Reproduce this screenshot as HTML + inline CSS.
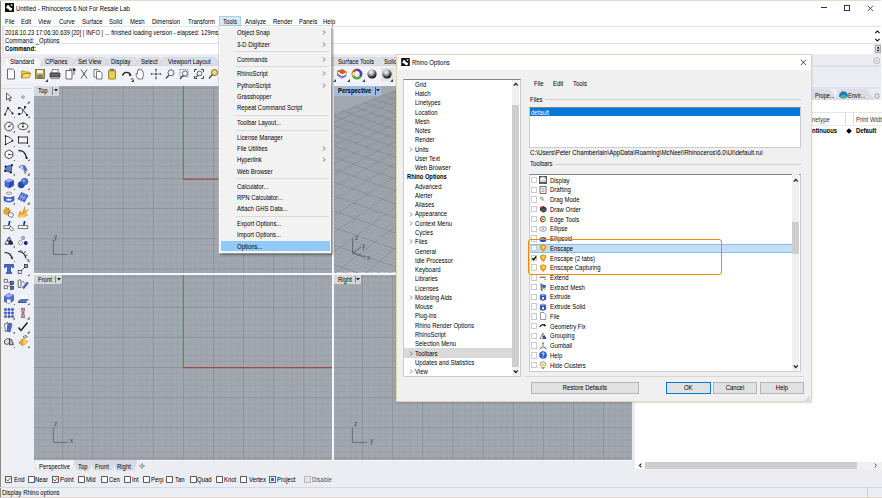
<!DOCTYPE html>
<html><head><meta charset="utf-8"><title>Rhino Options</title>
<style>
html,body{margin:0;padding:0;}
body{width:882px;height:498px;overflow:hidden;background:#fff;position:relative;font-family:"Liberation Sans",sans-serif;}
div,span,svg{position:absolute;box-sizing:border-box;}
.t{white-space:pre;line-height:10px;height:10px;transform-origin:0 50%;}
</style></head><body>

<div style="left:0px;top:0px;width:882px;height:498px;background:#fff;"></div>
<div style="left:0px;top:54px;width:882px;height:444px;background:#ebedf3;"></div>
<div style="left:0px;top:0px;width:881px;height:1px;background:#e3dccd;"></div>
<div style="left:0px;top:1px;width:1px;height:497px;background:#8e8b80;"></div>
<svg style="left:5px;top:3px" width="9" height="9" viewBox="0 0 9 9"><rect width="9" height="9" fill="#111"/><path d="M1.2 4.6 L2.4 2.2 L3.6 2.0 L4.4 3.4 L6.2 5.0 L7.4 5.2 L6.4 7.6 L4.4 7.4 L3.4 5.8 L1.8 5.6 Z" fill="#fff"/><path d="M5.6 1.2 L7.6 1.4 L7.2 3.2 L6.0 2.8Z" fill="#ddd"/></svg>
<span class="t" style="left:16px;top:3.50px;color:#000;font-size:6.7px;transform:scaleX(0.89);">Untitled - Rhinoceros 6 Not For Resale Lab</span>
<div style="left:821px;top:7.3px;width:5.5px;height:0.9px;background:#333;"></div>
<div style="left:843.6px;top:5px;width:6px;height:5.8px;border:0.9px solid #333;"></div>
<svg style="left:867px;top:4.6px" width="7" height="7" viewBox="0 0 7 7"><path d="M0.7 0.7L6.1 6.1M6.1 0.7L0.7 6.1" stroke="#222" stroke-width="0.8" fill="none"/></svg>
<div style="left:219.3px;top:16px;width:21.8px;height:9.7px;background:#d6e9f9;border:0.7px solid #a8d0f2;"></div>
<span class="t" style="left:5px;top:16.50px;color:#000;font-size:6.7px;transform:scaleX(0.89);">File</span>
<span class="t" style="left:20.9px;top:16.50px;color:#000;font-size:6.7px;transform:scaleX(0.89);">Edit</span>
<span class="t" style="left:38.2px;top:16.50px;color:#000;font-size:6.7px;transform:scaleX(0.89);">View</span>
<span class="t" style="left:58.5px;top:16.50px;color:#000;font-size:6.7px;transform:scaleX(0.89);">Curve</span>
<span class="t" style="left:81.7px;top:16.50px;color:#000;font-size:6.7px;transform:scaleX(0.89);">Surface</span>
<span class="t" style="left:108.8px;top:16.50px;color:#000;font-size:6.7px;transform:scaleX(0.89);">Solid</span>
<span class="t" style="left:129.6px;top:16.50px;color:#000;font-size:6.7px;transform:scaleX(0.89);">Mesh</span>
<span class="t" style="left:151.5px;top:16.50px;color:#000;font-size:6.7px;transform:scaleX(0.89);">Dimension</span>
<span class="t" style="left:188px;top:16.50px;color:#000;font-size:6.7px;transform:scaleX(0.89);">Transform</span>
<span class="t" style="left:223.1px;top:16.50px;color:#000;font-size:6.7px;transform:scaleX(0.89);">Tools</span>
<span class="t" style="left:244.7px;top:16.50px;color:#000;font-size:6.7px;transform:scaleX(0.89);">Analyze</span>
<span class="t" style="left:272.9px;top:16.50px;color:#000;font-size:6.7px;transform:scaleX(0.89);">Render</span>
<span class="t" style="left:298.7px;top:16.50px;color:#000;font-size:6.7px;transform:scaleX(0.89);">Panels</span>
<span class="t" style="left:323.4px;top:16.50px;color:#000;font-size:6.7px;transform:scaleX(0.89);">Help</span>
<div style="left:2px;top:25.5px;width:879px;height:28.7px;background:#dfe4ee;"></div>
<div style="left:4px;top:27.4px;width:870px;height:15.7px;background:#fff;"></div>
<div style="left:4px;top:44.4px;width:870px;height:9.2px;background:#fff;"></div>
<div style="left:874px;top:27.4px;width:7px;height:15.8px;background:#fff;"></div>
<span class="t" style="left:5px;top:27.50px;color:#000;font-size:6.7px;transform:scaleX(0.8723880597014925);">2018.10.23 17:06:30.639 [20] | INFO | ... finished loading version - elapsed: 129ms</span>
<span class="t" style="left:5px;top:35.50px;color:#000;font-size:6.7px;transform:scaleX(0.89);">Command: _Options</span>
<span class="t" style="left:5px;top:43.50px;color:#000;font-size:6.7px;transform:scaleX(0.89);font-weight:bold;">Command:</span>
<svg style="left:874px;top:29px" width="7" height="14" viewBox="0 0 7 14"><path d="M1.2 4.2L3.4 2L5.6 4.2M1.2 9.8L3.4 12L5.6 9.8" stroke="#111" stroke-width="1.100" fill="none"/></svg>
<div style="left:874.5px;top:44.6px;width:6.3px;height:8.2px;background:#e9e9e9;border:0.6px solid #aaa;"></div>
<svg style="left:874.5px;top:44.6px" width="6.3" height="8.2" viewBox="0 0 6.3 8.2"><path d="M1.500 3.500L3.150 1.500L4.800 3.500ZM1.500 4.800L3.150 6.800L4.800 4.800Z" fill="#111"/></svg>
<svg style="left:4px;top:56.6px" width="42" height="10" viewBox="0 0 42 10"><path d="M0 10 L0 2 Q0 0.5 1.5 0.5 L33 0.5 Q35 0.5 36 3 L40 10 Z" fill="#f4f6fa" stroke="#cdd2dc" stroke-width="0.6"/></svg>
<span class="t" style="left:9.5px;top:57.30px;color:#000;font-size:6.7px;transform:scaleX(0.89);">Standard</span>
<svg style="left:40px;top:57.2px" width="40" height="9" viewBox="0 0 40 9"><path d="M0 9 L4 1.5 Q4.6 0.5 6 0.5 L30 0.5 Q32 0.5 33 2 L37 9 Z" fill="#dcdfe6" stroke="#c6cbd6" stroke-width="0.6"/></svg>
<span class="t" style="left:45px;top:57.30px;color:#000;font-size:6.7px;transform:scaleX(0.89);">CPlanes</span>
<svg style="left:72px;top:57.2px" width="41" height="9" viewBox="0 0 41 9"><path d="M0 9 L4 1.5 Q4.6 0.5 6 0.5 L31 0.5 Q33 0.5 34 2 L38 9 Z" fill="#dcdfe6" stroke="#c6cbd6" stroke-width="0.6"/></svg>
<span class="t" style="left:77.5px;top:57.30px;color:#000;font-size:6.7px;transform:scaleX(0.89);">Set View</span>
<svg style="left:105px;top:57.2px" width="38" height="9" viewBox="0 0 38 9"><path d="M0 9 L4 1.5 Q4.6 0.5 6 0.5 L28 0.5 Q30 0.5 31 2 L35 9 Z" fill="#dcdfe6" stroke="#c6cbd6" stroke-width="0.6"/></svg>
<span class="t" style="left:110.5px;top:57.30px;color:#000;font-size:6.7px;transform:scaleX(0.89);">Display</span>
<svg style="left:135px;top:57.2px" width="32" height="9" viewBox="0 0 32 9"><path d="M0 9 L4 1.5 Q4.6 0.5 6 0.5 L22 0.5 Q24 0.5 25 2 L29 9 Z" fill="#dcdfe6" stroke="#c6cbd6" stroke-width="0.6"/></svg>
<span class="t" style="left:140.5px;top:57.30px;color:#000;font-size:6.7px;transform:scaleX(0.89);">Select</span>
<svg style="left:159px;top:57.2px" width="64" height="9" viewBox="0 0 64 9"><path d="M0 9 L4 1.5 Q4.6 0.5 6 0.5 L54 0.5 Q56 0.5 57 2 L61 9 Z" fill="#dcdfe6" stroke="#c6cbd6" stroke-width="0.6"/></svg>
<span class="t" style="left:167.5px;top:57.30px;color:#000;font-size:6.7px;transform:scaleX(0.89);">Viewport Layout</span>
<div style="left:2px;top:66.4px;width:879px;height:17.8px;background:#f1f3f8;"></div>
<svg style="left:332px;top:57.2px" width="50" height="9" viewBox="0 0 50 9"><path d="M0 9 L0 0.5 L43 0.5 Q45 0.5 46 2 L50 9 Z" fill="#dcdfe6" stroke="#c6cbd6" stroke-width="0.6"/></svg>
<span class="t" style="left:337.7px;top:57.30px;color:#000;font-size:6.7px;transform:scaleX(0.89);">Surface Tools</span>
<svg style="left:376px;top:57.2px" width="30" height="9" viewBox="0 0 30 9"><path d="M0 9 L4 1.5 Q4.6 0.5 6 0.5 L30 0.5 L30 9 Z" fill="#dcdfe6" stroke="#c6cbd6" stroke-width="0.6"/></svg>
<span class="t" style="left:384.2px;top:57.30px;color:#000;font-size:6.7px;transform:scaleX(0.89);">Solid</span>
<svg style="left:5.3px;top:68.2px" width="12" height="12" viewBox="0 0 12 12"><path d="M2.5 1h5l2 2v8h-7z" fill="#fff" stroke="#444" stroke-width="0.8"/></svg>
<svg style="left:19.9px;top:68.2px" width="12" height="12" viewBox="0 0 12 12"><path d="M1.5 3h3l1 1h4v1.5h-6l-2 4.5z" fill="#f4d24a" stroke="#8a6d10" stroke-width="0.6"/><path d="M1.5 10l2-4.5h7.5l-2 4.5z" fill="#f7dc6a" stroke="#8a6d10" stroke-width="0.6"/></svg>
<svg style="left:34.2px;top:68.2px" width="12" height="12" viewBox="0 0 12 12"><rect x="1.5" y="1.5" width="9" height="9" fill="#b9a83a" stroke="#5c5416" stroke-width="0.7"/><rect x="3" y="2" width="6" height="3.4" fill="#eee"/><rect x="3.6" y="7" width="4.8" height="3.4" fill="#777"/></svg>
<svg style="left:48.8px;top:68.2px" width="12" height="12" viewBox="0 0 12 12"><path d="M3.5 1.5h6l-1 3.5h-6z" fill="#fff" stroke="#333" stroke-width="0.6"/><path d="M1 5h10v4h-10z" fill="#666" stroke="#222" stroke-width="0.6"/><path d="M2 9h8v1.6h-8z" fill="#ddd" stroke="#333" stroke-width="0.5"/></svg>
<svg style="left:63.8px;top:68.2px" width="12" height="12" viewBox="0 0 12 12"><path d="M2 2.5h6v8.5h-6z" fill="#fff" stroke="#444" stroke-width="0.8"/><path d="M5 1h5v6" fill="none" stroke="#444" stroke-width="0.8"/><rect x="9" y="0.5" width="2.4" height="2.4" fill="#222"/></svg>
<svg style="left:77.7px;top:68.2px" width="12" height="12" viewBox="0 0 12 12"><path d="M3 1.5l6 9M9 1.5l-6 9" stroke="#444" stroke-width="0.9" fill="none"/></svg>
<svg style="left:92.0px;top:68.2px" width="12" height="12" viewBox="0 0 12 12"><path d="M2 1.5h4l1.5 1.5v6h-5.5z" fill="#fff" stroke="#444" stroke-width="0.7"/><path d="M4.5 3.5h4l1.5 1.5v6h-5.5z" fill="#fff" stroke="#444" stroke-width="0.7"/></svg>
<svg style="left:106.3px;top:68.2px" width="12" height="12" viewBox="0 0 12 12"><rect x="2.5" y="2" width="7" height="9" rx="0.8" fill="#e8cf4a" stroke="#6d5a10" stroke-width="0.7"/><rect x="4.2" y="1" width="3.6" height="2" fill="#999" stroke="#444" stroke-width="0.4"/></svg>
<svg style="left:121.4px;top:68.2px" width="12" height="12" viewBox="0 0 12 12"><path d="M1.5 7.5c1.5-4 6-4 8-1" fill="none" stroke="#222" stroke-width="1.4"/><path d="M8 5.2l3 2-3 1z" fill="#222"/><path d="M9.5 11.5l2-2v2z" fill="#333"/></svg>
<svg style="left:134.7px;top:68.2px" width="12" height="12" viewBox="0 0 12 12"><path d="M3 11c-1.5-2-2-4-2-5.5l1.5 0.5v-3.5l1.2-0.3v-1l1.3-0.2 0.3 0.8 1.3 0 0.2 1 1.2 0.4c0.6 2.5 0.4 5-0.5 7.8z" fill="#fff" stroke="#444" stroke-width="0.7"/></svg>
<svg style="left:149.8px;top:68.2px" width="12" height="12" viewBox="0 0 12 12"><circle cx="6" cy="6" r="1.3" fill="#555"/><path d="M6 1v3M6 8v3M1 6h3M8 6h3" stroke="#555" stroke-width="0.9"/><path d="M6 0.5l1.2 1.5h-2.4zM6 11.5l1.2-1.5h-2.4zM0.5 6l1.5-1.2v2.4zM11.5 6l-1.5-1.2v2.4z" fill="#555"/></svg>
<svg style="left:163.6px;top:68.2px" width="12" height="12" viewBox="0 0 12 12"><circle cx="7" cy="4.8" r="3" fill="#eef" stroke="#444" stroke-width="0.8"/><path d="M4.8 7.2l-3 3.4" stroke="#444" stroke-width="1.3"/></svg>
<svg style="left:178.2px;top:68.2px" width="12" height="12" viewBox="0 0 12 12"><rect x="2" y="1.5" width="8" height="7" fill="none" stroke="#555" stroke-width="0.7" stroke-dasharray="1.4 1"/><circle cx="7" cy="5.5" r="2.6" fill="#eef" stroke="#444" stroke-width="0.8"/><path d="M5 7.6l-3 3.4" stroke="#444" stroke-width="1.3"/></svg>
<svg style="left:192.5px;top:68.2px" width="12" height="12" viewBox="0 0 12 12"><path d="M1.5 4v-2.5h2.5M8 1.5h2.5v2.5M10.5 8v2.5h-2.5M4 10.5h-2.5v-2.5" fill="none" stroke="#333" stroke-width="0.9"/><circle cx="6.5" cy="5.5" r="2.4" fill="#eef" stroke="#444" stroke-width="0.8"/><path d="M4.8 7.2l-2 2.4" stroke="#444" stroke-width="1.1"/></svg>
<svg style="left:207.0px;top:68.2px" width="12" height="12" viewBox="0 0 12 12"><circle cx="7.5" cy="4.5" r="3" fill="#f6e04a" stroke="#444" stroke-width="0.8"/><path d="M5.3 6.8l-3.4 3.8" stroke="#444" stroke-width="1.3"/></svg>
<svg style="left:336.0px;top:68.2px" width="12" height="12" viewBox="0 0 12 12"><path d="M1.5 3l5-1.5 4 2.5-1 4.5-4 2-4-3z" fill="#fff" stroke="#333" stroke-width="0.5"/><path d="M1.5 3l5-1.5 4 2.5-4.5 2.5z" fill="#e8531e"/><path d="M1.5 6.2l4.5 3 3.6-1.8" fill="none" stroke="#2c49b8" stroke-width="1.1"/></svg>
<svg style="left:350.5px;top:68.2px" width="12" height="12" viewBox="0 0 12 12"><circle cx="6" cy="6" r="4" fill="none" stroke="#e33" stroke-width="2.2"/><path d="M6 2a4 4 0 0 1 3.46 6" fill="none" stroke="#3a3ae0" stroke-width="2.2"/><path d="M9.46 8a4 4 0 0 1-6.92 0" fill="none" stroke="#3c3" stroke-width="2.2"/><path d="M2.54 8a4 4 0 0 1 0-4" fill="none" stroke="#ee3" stroke-width="2.2"/><circle cx="6" cy="6" r="5.2" fill="none" stroke="#333" stroke-width="0.4"/></svg>
<svg style="left:365.6px;top:68.2px" width="12" height="12" viewBox="0 0 12 12"><defs><radialGradient id="g1" cx="0.4" cy="0.3" r="0.7"><stop offset="0" stop-color="#fff"/><stop offset="0.35" stop-color="#bbb"/><stop offset="0.8" stop-color="#333"/><stop offset="1" stop-color="#000"/></radialGradient></defs><circle cx="6" cy="6" r="4.6" fill="url(#g1)"/></svg>
<div style="left:380.5px;top:68px;width:13px;height:13px;background:#dfe2e8;"></div>
<svg style="left:380.5px;top:68.2px" width="12" height="12" viewBox="0 0 12 12"><defs><radialGradient id="g2" cx="0.4" cy="0.3" r="0.7"><stop offset="0" stop-color="#fff"/><stop offset="0.35" stop-color="#bbb"/><stop offset="0.8" stop-color="#333"/><stop offset="1" stop-color="#000"/></radialGradient></defs><circle cx="6" cy="6" r="4.6" fill="url(#g2)"/></svg>
<svg style="left:44.5px;top:79px" width="3" height="3" viewBox="0 0 3 3"><path d="M3 0v3h-3z" fill="#444"/></svg>
<svg style="left:131.0px;top:79px" width="3" height="3" viewBox="0 0 3 3"><path d="M3 0v3h-3z" fill="#444"/></svg>
<svg style="left:332.5px;top:79px" width="3" height="3" viewBox="0 0 3 3"><path d="M3 0v3h-3z" fill="#444"/></svg>
<svg style="left:347.0px;top:79px" width="3" height="3" viewBox="0 0 3 3"><path d="M3 0v3h-3z" fill="#444"/></svg>
<svg style="left:361.5px;top:79px" width="3" height="3" viewBox="0 0 3 3"><path d="M3 0v3h-3z" fill="#444"/></svg>
<svg style="left:390.0px;top:79px" width="3" height="3" viewBox="0 0 3 3"><path d="M3 0v3h-3z" fill="#444"/></svg>
<div style="left:1px;top:84.5px;width:33px;height:403px;background:#eef0f5;"></div>
<div style="left:2px;top:88.3px;width:30px;height:0.8px;background:#d5dae4;"></div>
<svg style="left:2.5px;top:90.8px" width="12" height="12" viewBox="0 0 12 12"><path d="M3.5 2l0 7 1.8-1.6 1.3 2.8 1.1-0.5-1.3-2.7 2.3-0.2z" fill="#fff" stroke="#222" stroke-width="0.7"/></svg>
<svg style="left:17.0px;top:90.8px" width="12" height="12" viewBox="0 0 12 12"><circle cx="6" cy="6" r="1.3" fill="#ddd" stroke="#666" stroke-width="0.6"/></svg>
<svg style="left:2.5px;top:105.1px" width="12" height="12" viewBox="0 0 12 12"><path d="M2 9.5L5 3l4.5 5.5" fill="none" stroke="#222" stroke-width="0.8"/><circle cx="2" cy="9.5" r="0.9"/><circle cx="5" cy="3" r="0.9"/><circle cx="9.5" cy="8.5" r="0.9"/></svg>
<svg style="left:17.0px;top:105.1px" width="12" height="12" viewBox="0 0 12 12"><path d="M2 3c5-1 5 7 0 6M8 2l-1.5 3.5 3.5 4.5" fill="none" stroke="#222" stroke-width="0.8"/><circle cx="2" cy="3" r="1"/><circle cx="2" cy="9" r="1"/><circle cx="8" cy="2" r="1"/><circle cx="10" cy="10" r="1"/></svg>
<svg style="left:2.5px;top:119.5px" width="12" height="12" viewBox="0 0 12 12"><circle cx="6" cy="6.5" r="4.3" fill="#f4f4f4" stroke="#222" stroke-width="0.8"/><path d="M6 6.5l3-3" stroke="#222" stroke-width="0.8"/><circle cx="6" cy="6.5" r="0.8"/></svg>
<svg style="left:17.0px;top:119.5px" width="12" height="12" viewBox="0 0 12 12"><ellipse cx="6" cy="6.5" rx="5" ry="3.2" fill="#f4f4f4" stroke="#222" stroke-width="0.8"/><circle cx="6" cy="6.5" r="0.9"/><path d="M6 2v3" stroke="#222" stroke-width="0.7"/></svg>
<svg style="left:2.5px;top:133.9px" width="12" height="12" viewBox="0 0 12 12"><path d="M2.5 2c4 0.5 6.5 2.5 7 5l-7 3.5z" fill="#f4f4f4" stroke="#222" stroke-width="0.8"/><circle cx="2.5" cy="2" r="0.8"/><circle cx="2.5" cy="10.5" r="0.8"/><circle cx="9.5" cy="7" r="0.8"/></svg>
<svg style="left:17.0px;top:133.9px" width="12" height="12" viewBox="0 0 12 12"><rect x="1.5" y="3" width="9" height="6" fill="#f4f4f4" stroke="#222" stroke-width="0.9"/><circle cx="1.5" cy="3" r="0.7"/><circle cx="10.5" cy="9" r="0.7"/></svg>
<svg style="left:2.5px;top:148.3px" width="12" height="12" viewBox="0 0 12 12"><path d="M6 2l3.8 2.2v4.4L6 10.8 2.2 8.6V4.2z" fill="#fff" stroke="#222" stroke-width="0.8"/><circle cx="6" cy="6.5" r="0.8"/><path d="M6 6.5h3.5" stroke="#222" stroke-width="0.6"/></svg>
<svg style="left:17.0px;top:148.3px" width="12" height="12" viewBox="0 0 12 12"><path d="M1.5 2.5c5 0 7 2 8 7.5" fill="none" stroke="#222" stroke-width="1.4"/><circle cx="9.7" cy="10" r="1"/></svg>
<svg style="left:2.5px;top:162.7px" width="12" height="12" viewBox="0 0 12 12"><path d="M2.5 3.5l6.5-1.5-1 7.5-6-1.5z" fill="#5b7fe0" stroke="#222" stroke-width="0.6"/><circle cx="2.5" cy="3.5" r="0.9"/><circle cx="9" cy="2" r="0.9"/><circle cx="8" cy="9.5" r="0.9"/><circle cx="2" cy="8" r="0.9"/></svg>
<svg style="left:17.0px;top:162.7px" width="12" height="12" viewBox="0 0 12 12"><path d="M2 4c2-2 4-2 6-1l2 4-2 3.5c0-3-2-5-6-6.500z" fill="#fff" stroke="#222" stroke-width="0.6"/><path d="M5 3.200l3-0.200 2 4-2.500 1.500c-0.500-2-1.500-3.500-2.500-5.300z" fill="#4a6fd8"/></svg>
<svg style="left:2.5px;top:177.0px" width="12" height="12" viewBox="0 0 12 12"><path d="M2 4l4-2 4.5 1.500v5l-4.500 2.500-4-2z" fill="#4a6fd8" stroke="#1a2f80" stroke-width="0.5"/><path d="M2 4l4 1.500 4.500-2-4.500-1.500z" fill="#9db4f4"/><path d="M6 5.500v5.500l4.500-2.500v-5z" fill="#2c49b8"/></svg>
<svg style="left:17.0px;top:177.0px" width="12" height="12" viewBox="0 0 12 12"><circle cx="4.300" cy="7.800" r="3.200" fill="#2c49b8" stroke="#14256a" stroke-width="0.4"/><circle cx="7.600" cy="4.600" r="3.400" fill="#4a6fd8" stroke="#14256a" stroke-width="0.4"/><circle cx="6.800" cy="3.600" r="1.200" fill="#a9bdf6"/></svg>
<svg style="left:2.5px;top:191.4px" width="12" height="12" viewBox="0 0 12 12"><ellipse cx="6" cy="2.200" rx="2.800" ry="1.100" fill="#fff" stroke="#333" stroke-width="0.5"/><path d="M1 5.500c3 1.500 7 1.500 10 0v4c-3 2-7 2-10 0z" fill="#4a6fd8" stroke="#14256a" stroke-width="0.5"/><ellipse cx="6" cy="8.700" rx="2.600" ry="1" fill="#fff"/></svg>
<svg style="left:17.0px;top:191.4px" width="12" height="12" viewBox="0 0 12 12"><path d="M4.500 1.500l6.500 3-3.500 6.500-6.500-3z" fill="#4a6fd8" stroke="#14256a" stroke-width="0.5"/><path d="M2.800 5l6.500 3M6.200 2.500l-3.400 6.300M8.500 3.500l-3.400 6.300" stroke="#c7d3fa" stroke-width="0.6"/></svg>
<svg style="left:2.5px;top:205.8px" width="12" height="12" viewBox="0 0 12 12"><path d="M3 1l1.200 1.800 2-0.800-0.400 2.100 2 0.700-1.700 1.200 0.700 2-2-0.500-1 1.800-0.900-1.900-2.100 0.400 0.800-1.900-1.600-1.300 2-0.600z" fill="#f2a516" stroke="#8a5a06" stroke-width="0.4"/><path d="M6 6l4.500 2-1.500 3.500-3.500-1.500z" fill="#fff" stroke="#333" stroke-width="0.6"/></svg>
<svg style="left:17.0px;top:205.8px" width="12" height="12" viewBox="0 0 12 12"><path d="M1 11l2-6 2 2.500 3-7-0.500 5.500 3.500-2.500-3 5 3 0.500-4 2z" fill="#f5a20a" stroke="#a05a00" stroke-width="0.3"/><path d="M1 11l3-3 1.500 1.500 3-4.500-1 4 2.500 0.500-3 1.500z" fill="#fbd34a"/></svg>
<svg style="left:2.5px;top:220.2px" width="12" height="12" viewBox="0 0 12 12"><path d="M5.800 1h1.800l-1 4.200h-1.600z" fill="#1b2fa0"/><rect x="1" y="5.800" width="6.500" height="2.600" fill="#fff" stroke="#222" stroke-width="0.6"/><path d="M6 8l2-1.600 2.600 3-2 1.600z" fill="#fff" stroke="#222" stroke-width="0.6"/></svg>
<svg style="left:17.0px;top:220.2px" width="12" height="12" viewBox="0 0 12 12"><path d="M6.800 1h1.800l-1 4.200h-1.600z" fill="#1b2fa0"/><rect x="1.200" y="5.800" width="9.600" height="2.800" fill="#fff" stroke="#222" stroke-width="0.6"/></svg>
<svg style="left:2.5px;top:234.6px" width="12" height="12" viewBox="0 0 12 12"><path d="M6 1.500l4.500 8h-9z" fill="#222"/><circle cx="6" cy="4.500" r="1.700" fill="#9db4f4" stroke="#000" stroke-width="0.4"/><circle cx="4.200" cy="7.600" r="1.700" fill="#fff" stroke="#000" stroke-width="0.4"/><circle cx="7.800" cy="7.600" r="1.700" fill="#1b2fa0" stroke="#000" stroke-width="0.4"/></svg>
<svg style="left:17.0px;top:234.6px" width="12" height="12" viewBox="0 0 12 12"><circle cx="6" cy="3" r="1.700" fill="#9db4f4" stroke="#556" stroke-width="0.4"/><circle cx="3.400" cy="7.600" r="2" fill="#fff" stroke="#444" stroke-width="0.5"/><circle cx="8.800" cy="8" r="1.900" fill="#14208a"/></svg>
<svg style="left:2.5px;top:248.9px" width="12" height="12" viewBox="0 0 12 12"><path d="M1.500 3.500c4 0 7 2 7.500 6.500" fill="none" stroke="#222" stroke-width="1.200"/><path d="M8 7.500l2.300 0.500-1 3z" fill="#444"/></svg>
<svg style="left:17.0px;top:248.9px" width="12" height="12" viewBox="0 0 12 12"><path d="M1 2.500c4.500 0 7 2.500 8 7" fill="none" stroke="#222" stroke-width="1.100"/><path d="M3.500 1l1.500 1.500M7 3.500l1.800-1M8.500 6.500l2-0.500" stroke="#222" stroke-width="0.800"/><path d="M9.500 11.500l2-2v2z" fill="#333"/></svg>
<svg style="left:2.5px;top:263.3px" width="12" height="12" viewBox="0 0 12 12"><path d="M1.500 1.500h9v3h-1.200l-0.600-1.200h-1.200v5.500l1.200 0.700v1h-5.400v-1l1.200-0.700v-5.500h-1.200l-0.600 1.200h-1.200z" fill="#3f66dc" stroke="#14256a" stroke-width="0.6"/></svg>
<svg style="left:17.0px;top:263.3px" width="12" height="12" viewBox="0 0 12 12"><path d="M3 9l6-6" stroke="#222" stroke-width="0.700"/><rect x="1.200" y="7.500" width="3" height="3" fill="#fff" stroke="#222" stroke-width="0.700"/><rect x="7.600" y="1.500" width="3" height="3" fill="#7f9cf0" stroke="#222" stroke-width="0.700"/></svg>
<svg style="left:2.5px;top:277.7px" width="12" height="12" viewBox="0 0 12 12"><path d="M3 3l6 3-6 3.500M9 6v4" stroke="#333" stroke-width="0.500" fill="none"/><rect x="1.200" y="1.200" width="3" height="3" fill="#fff" stroke="#222" stroke-width="0.600"/><rect x="7.200" y="3.200" width="3.200" height="3.200" fill="#4a6fd8" stroke="#222" stroke-width="0.600"/><rect x="1.200" y="7.800" width="3" height="3" fill="#fff" stroke="#222" stroke-width="0.600"/><rect x="7.600" y="8.400" width="3" height="3" fill="#4a6fd8" stroke="#222" stroke-width="0.600"/></svg>
<svg style="left:17.0px;top:277.7px" width="12" height="12" viewBox="0 0 12 12"><rect x="1.200" y="2" width="2.800" height="7.500" rx="0.600" fill="#fff" stroke="#222" stroke-width="0.700"/><path d="M5.500 9.500l4.500-5.500 1.300 1.200-4.500 5.500z" fill="#4a6fd8" stroke="#14256a" stroke-width="0.500"/><path d="M5.500 3.500l2 1" stroke="#222" stroke-width="0.800"/></svg>
<svg style="left:2.5px;top:292.1px" width="12" height="12" viewBox="0 0 12 12"><path d="M1.500 4l4-2.500 5 1.500v5.500l-4.500 3-4.500-2z" fill="#4a6fd8" stroke="#14256a" stroke-width="0.500"/><path d="M1.500 4l4.500 1.500 4.500-2.500-5-1.500z" fill="#9db4f4"/><path d="M4 7.500h3.500v3l-1.500 1-2-1z" fill="#fff"/></svg>
<svg style="left:17.0px;top:292.1px" width="12" height="12" viewBox="0 0 12 12"><path d="M1 9.500l2.500-2h8l-2.500 2z" fill="#4a6fd8" stroke="#14256a" stroke-width="0.400"/><path d="M3 3v4M6 3v4M9 3v4" stroke="#fff" stroke-width="1.300"/><path d="M1 10.500h8.500" stroke="#14256a" stroke-width="0.800"/></svg>
<svg style="left:2.5px;top:306.5px" width="12" height="12" viewBox="0 0 12 12"><g fill="#3f66dc" stroke="#14256a" stroke-width="0.300"><circle cx="2.500" cy="2.500" r="1.300"/><circle cx="6" cy="2.500" r="1.300"/><circle cx="9.500" cy="2.500" r="1.300"/><circle cx="2.500" cy="6" r="1.300"/><circle cx="6" cy="6" r="1.300"/><circle cx="9.500" cy="6" r="1.300"/><circle cx="2.500" cy="9.500" r="1.300" fill="#777"/><circle cx="6" cy="9.500" r="1.300"/><circle cx="9.500" cy="9.500" r="1.300"/></g></svg>
<svg style="left:17.0px;top:306.5px" width="12" height="12" viewBox="0 0 12 12"><path d="M4.600 1.200c1 0.600 2 0.600 2.800 0 0.600 2-0.600 2.800-0.600 4.800s1.200 2.800 0.600 4.800c-1-0.600-2-0.600-2.800 0-0.600-2 0.600-2.800 0.600-4.800s-1.200-2.800-0.600-4.800z" fill="#f3f3f3" stroke="#222" stroke-width="0.600"/><path d="M6 1.500v9" stroke="#d22" stroke-width="0.900"/></svg>
<svg style="left:2.5px;top:320.8px" width="12" height="12" viewBox="0 0 12 12"><path d="M1.500 3l2.500-1 1 7.500-2.500 1z" fill="#fff" stroke="#222" stroke-width="0.600"/><path d="M6 2l3 1-2 8-3-1z" fill="#4a6fd8" stroke="#14256a" stroke-width="0.500"/><path d="M4 1l1.500 1.500" stroke="#222" stroke-width="0.700"/></svg>
<svg style="left:17.0px;top:320.8px" width="12" height="12" viewBox="0 0 12 12"><path d="M1.500 6.500l2.500 3 6.500-8" fill="none" stroke="#111" stroke-width="1.300"/></svg>
<svg style="left:2.5px;top:335.2px" width="12" height="12" viewBox="0 0 12 12"><path d="M1.500 5.500l3-2 2.500 0.500v4l-3 1.500-2.500-1z" fill="#ddd" stroke="#222" stroke-width="0.700"/><path d="M6.500 4l2 0.500 2 5-4 0.500z" fill="#bbb" stroke="#222" stroke-width="0.700"/></svg>
<svg style="left:17.0px;top:335.2px" width="12" height="12" viewBox="0 0 12 12"><path d="M2 8l4.500-5 4 4-4.500 3.500z" fill="#f3a81e" stroke="#7a4a00" stroke-width="0.500"/><path d="M6.500 3l4 4-4.500 3.500z" fill="#f9cf6a"/><path d="M6 1.500l3-1 1.500 1.200-3 1z" fill="#fff" stroke="#222" stroke-width="0.600"/></svg>
<svg style="left:27.2px;top:101.3px" width="2.6" height="2.6" viewBox="0 0 3 3"><path d="M3 0v3h-3z" fill="#444"/></svg>
<svg style="left:12.7px;top:115.7px" width="2.6" height="2.6" viewBox="0 0 3 3"><path d="M3 0v3h-3z" fill="#444"/></svg>
<svg style="left:27.2px;top:115.7px" width="2.6" height="2.6" viewBox="0 0 3 3"><path d="M3 0v3h-3z" fill="#444"/></svg>
<svg style="left:12.7px;top:130.1px" width="2.6" height="2.6" viewBox="0 0 3 3"><path d="M3 0v3h-3z" fill="#444"/></svg>
<svg style="left:27.2px;top:130.1px" width="2.6" height="2.6" viewBox="0 0 3 3"><path d="M3 0v3h-3z" fill="#444"/></svg>
<svg style="left:12.7px;top:144.5px" width="2.6" height="2.6" viewBox="0 0 3 3"><path d="M3 0v3h-3z" fill="#444"/></svg>
<svg style="left:27.2px;top:144.5px" width="2.6" height="2.6" viewBox="0 0 3 3"><path d="M3 0v3h-3z" fill="#444"/></svg>
<svg style="left:12.7px;top:158.9px" width="2.6" height="2.6" viewBox="0 0 3 3"><path d="M3 0v3h-3z" fill="#444"/></svg>
<svg style="left:27.2px;top:158.9px" width="2.6" height="2.6" viewBox="0 0 3 3"><path d="M3 0v3h-3z" fill="#444"/></svg>
<svg style="left:12.7px;top:173.2px" width="2.6" height="2.6" viewBox="0 0 3 3"><path d="M3 0v3h-3z" fill="#444"/></svg>
<svg style="left:27.2px;top:173.2px" width="2.6" height="2.6" viewBox="0 0 3 3"><path d="M3 0v3h-3z" fill="#444"/></svg>
<svg style="left:12.7px;top:187.6px" width="2.6" height="2.6" viewBox="0 0 3 3"><path d="M3 0v3h-3z" fill="#444"/></svg>
<svg style="left:27.2px;top:187.6px" width="2.6" height="2.6" viewBox="0 0 3 3"><path d="M3 0v3h-3z" fill="#444"/></svg>
<svg style="left:12.7px;top:202.0px" width="2.6" height="2.6" viewBox="0 0 3 3"><path d="M3 0v3h-3z" fill="#444"/></svg>
<svg style="left:27.2px;top:202.0px" width="2.6" height="2.6" viewBox="0 0 3 3"><path d="M3 0v3h-3z" fill="#444"/></svg>
<svg style="left:12.7px;top:245.2px" width="2.6" height="2.6" viewBox="0 0 3 3"><path d="M3 0v3h-3z" fill="#444"/></svg>
<svg style="left:12.7px;top:259.5px" width="2.6" height="2.6" viewBox="0 0 3 3"><path d="M3 0v3h-3z" fill="#444"/></svg>
<svg style="left:27.2px;top:259.5px" width="2.6" height="2.6" viewBox="0 0 3 3"><path d="M3 0v3h-3z" fill="#444"/></svg>
<svg style="left:27.2px;top:273.9px" width="2.6" height="2.6" viewBox="0 0 3 3"><path d="M3 0v3h-3z" fill="#444"/></svg>
<svg style="left:12.7px;top:302.7px" width="2.6" height="2.6" viewBox="0 0 3 3"><path d="M3 0v3h-3z" fill="#444"/></svg>
<svg style="left:27.2px;top:302.7px" width="2.6" height="2.6" viewBox="0 0 3 3"><path d="M3 0v3h-3z" fill="#444"/></svg>
<svg style="left:12.7px;top:317.1px" width="2.6" height="2.6" viewBox="0 0 3 3"><path d="M3 0v3h-3z" fill="#444"/></svg>
<svg style="left:27.2px;top:317.1px" width="2.6" height="2.6" viewBox="0 0 3 3"><path d="M3 0v3h-3z" fill="#444"/></svg>
<svg style="left:12.7px;top:331.4px" width="2.6" height="2.6" viewBox="0 0 3 3"><path d="M3 0v3h-3z" fill="#444"/></svg>
<svg style="left:27.2px;top:331.4px" width="2.6" height="2.6" viewBox="0 0 3 3"><path d="M3 0v3h-3z" fill="#444"/></svg>
<svg style="left:12.7px;top:345.8px" width="2.6" height="2.6" viewBox="0 0 3 3"><path d="M3 0v3h-3z" fill="#444"/></svg>
<svg style="left:27.2px;top:345.8px" width="2.6" height="2.6" viewBox="0 0 3 3"><path d="M3 0v3h-3z" fill="#444"/></svg>
<div style="left:34px;top:85px;width:600px;height:376px;background:#f4f6fa;"></div>
<svg style="left:34px;top:86px" width="298" height="187" viewBox="0 0 298 187"><defs><pattern id="p1" x="28.24" y="1.58" width="30.14" height="30.14" patternUnits="userSpaceOnUse"><path d="M6.528 0V30.14M0 6.528H30.14M12.556 0V30.14M0 12.556H30.14M18.584 0V30.14M0 18.584H30.14M24.612 0V30.14M0 24.612H30.14" stroke="#9aa0a8" stroke-width="1"/><path d="M0.5 0V30.14M0 0.5H30.14" stroke="#8d939b" stroke-width="1"/></pattern></defs><rect width="298" height="187" fill="#a2a8b0"/><rect width="298" height="187" fill="url(#p1)"/><path d="M149.400 0V93.600" stroke="#4c9a50" stroke-width="1.250"/><path d="M148.800 93.100H298" stroke="#a04a4a" stroke-width="1.250"/></svg>
<svg style="left:34px;top:274px" width="298" height="186" viewBox="0 0 298 186"><defs><pattern id="p2" x="28.24" y="2.58" width="30.14" height="30.14" patternUnits="userSpaceOnUse"><path d="M6.528 0V30.14M0 6.528H30.14M12.556 0V30.14M0 12.556H30.14M18.584 0V30.14M0 18.584H30.14M24.612 0V30.14M0 24.612H30.14" stroke="#9aa0a8" stroke-width="1"/><path d="M0.5 0V30.14M0 0.5H30.14" stroke="#8d939b" stroke-width="1"/></pattern></defs><rect width="298" height="186" fill="#a2a8b0"/><rect width="298" height="186" fill="url(#p2)"/><path d="M149.400 0V94" stroke="#4c9a50" stroke-width="1.250"/><path d="M148.800 93.500H298" stroke="#a04a4a" stroke-width="1.250"/></svg>
<svg style="left:334px;top:274px" width="298" height="186" viewBox="0 0 298 186"><defs><pattern id="p3" x="28.00" y="2.58" width="30.14" height="30.14" patternUnits="userSpaceOnUse"><path d="M6.528 0V30.14M0 6.528H30.14M12.556 0V30.14M0 12.556H30.14M18.584 0V30.14M0 18.584H30.14M24.612 0V30.14M0 24.612H30.14" stroke="#9aa0a8" stroke-width="1"/><path d="M0.5 0V30.14M0 0.5H30.14" stroke="#8d939b" stroke-width="1"/></pattern></defs><rect width="298" height="186" fill="#a2a8b0"/><rect width="298" height="186" fill="url(#p3)"/></svg>
<svg style="left:334.3px;top:86px" width="64" height="186.5" viewBox="334.3 86 64 186.5"><rect x="334.3" y="86" width="64" height="186.5" fill="#a2a8b0"/><defs><clipPath id="cp"><path d="M334 114.300L398.500 89L398.500 273H334z"/></clipPath></defs><g clip-path="url(#cp)"><path d="M334.400 114.1L400 88.2" stroke="#959ba3" stroke-width="0.6"/><path d="M334.400 115.3L400 89.2" stroke="#858b93" stroke-width="0.9"/><path d="M334.400 116.6L400 90.3" stroke="#959ba3" stroke-width="0.6"/><path d="M334.400 117.9L400 91.4" stroke="#959ba3" stroke-width="0.6"/><path d="M334.400 119.2L400 92.5" stroke="#959ba3" stroke-width="0.6"/><path d="M334.400 120.5L400 93.6" stroke="#959ba3" stroke-width="0.6"/><path d="M334.400 121.8L400 94.7" stroke="#858b93" stroke-width="0.9"/><path d="M334.400 123.2L400 95.8" stroke="#959ba3" stroke-width="0.6"/><path d="M334.400 124.6L400 97.0" stroke="#959ba3" stroke-width="0.6"/><path d="M334.400 126.0L400 98.2" stroke="#959ba3" stroke-width="0.6"/><path d="M334.400 127.4L400 99.4" stroke="#959ba3" stroke-width="0.6"/><path d="M334.400 128.8L400 100.6" stroke="#858b93" stroke-width="0.9"/><path d="M334.400 130.3L400 101.9" stroke="#959ba3" stroke-width="0.6"/><path d="M334.400 131.8L400 103.1" stroke="#959ba3" stroke-width="0.6"/><path d="M334.400 133.3L400 104.4" stroke="#959ba3" stroke-width="0.6"/><path d="M334.400 134.9L400 105.7" stroke="#959ba3" stroke-width="0.6"/><path d="M334.400 136.5L400 107.0" stroke="#858b93" stroke-width="0.9"/><path d="M334.400 138.1L400 108.4" stroke="#959ba3" stroke-width="0.6"/><path d="M334.400 139.7L400 109.7" stroke="#959ba3" stroke-width="0.6"/><path d="M334.400 141.3L400 111.1" stroke="#959ba3" stroke-width="0.6"/><path d="M334.400 143.0L400 112.6" stroke="#959ba3" stroke-width="0.6"/><path d="M334.400 144.7L400 114.0" stroke="#858b93" stroke-width="0.9"/><path d="M334.400 146.5L400 115.5" stroke="#959ba3" stroke-width="0.6"/><path d="M334.400 148.3L400 117.0" stroke="#959ba3" stroke-width="0.6"/><path d="M334.400 150.1L400 118.5" stroke="#959ba3" stroke-width="0.6"/><path d="M334.400 151.9L400 120.0" stroke="#959ba3" stroke-width="0.6"/><path d="M334.400 153.8L400 121.6" stroke="#858b93" stroke-width="0.9"/><path d="M334.400 155.7L400 123.2" stroke="#959ba3" stroke-width="0.6"/><path d="M334.400 157.6L400 124.9" stroke="#959ba3" stroke-width="0.6"/><path d="M334.400 159.6L400 126.5" stroke="#959ba3" stroke-width="0.6"/><path d="M334.400 161.7L400 128.2" stroke="#959ba3" stroke-width="0.6"/><path d="M334.400 163.7L400 130.0" stroke="#858b93" stroke-width="0.9"/><path d="M334.400 165.8L400 131.8" stroke="#959ba3" stroke-width="0.6"/><path d="M334.400 168.0L400 133.6" stroke="#959ba3" stroke-width="0.6"/><path d="M334.400 170.1L400 135.4" stroke="#959ba3" stroke-width="0.6"/><path d="M334.400 172.4L400 137.3" stroke="#959ba3" stroke-width="0.6"/><path d="M334.400 174.7L400 139.2" stroke="#858b93" stroke-width="0.9"/><path d="M334.400 177.0L400 141.2" stroke="#959ba3" stroke-width="0.6"/><path d="M334.400 179.3L400 143.1" stroke="#959ba3" stroke-width="0.6"/><path d="M334.400 181.8L400 145.2" stroke="#959ba3" stroke-width="0.6"/><path d="M334.400 184.2L400 147.3" stroke="#959ba3" stroke-width="0.6"/><path d="M334.400 186.8L400 149.4" stroke="#858b93" stroke-width="0.9"/><path d="M334.400 189.3L400 151.6" stroke="#959ba3" stroke-width="0.6"/><path d="M334.400 192.0L400 153.8" stroke="#959ba3" stroke-width="0.6"/><path d="M334.400 194.7L400 156.1" stroke="#959ba3" stroke-width="0.6"/><path d="M334.400 197.4L400 158.4" stroke="#959ba3" stroke-width="0.6"/><path d="M334.400 200.3L400 160.8" stroke="#858b93" stroke-width="0.9"/><path d="M334.400 203.1L400 163.2" stroke="#959ba3" stroke-width="0.6"/><path d="M334.400 206.1L400 165.7" stroke="#959ba3" stroke-width="0.6"/><path d="M334.400 209.1L400 168.2" stroke="#959ba3" stroke-width="0.6"/><path d="M334.400 212.2L400 170.8" stroke="#959ba3" stroke-width="0.6"/><path d="M334.400 215.4L400 173.5" stroke="#858b93" stroke-width="0.9"/><path d="M334.400 218.6L400 176.2" stroke="#959ba3" stroke-width="0.6"/><path d="M334.400 221.9L400 179.0" stroke="#959ba3" stroke-width="0.6"/><path d="M334.400 225.3L400 181.9" stroke="#959ba3" stroke-width="0.6"/><path d="M334.400 228.8L400 184.8" stroke="#959ba3" stroke-width="0.6"/><path d="M334.400 232.4L400 187.8" stroke="#858b93" stroke-width="0.9"/><path d="M334.400 236.1L400 190.9" stroke="#959ba3" stroke-width="0.6"/><path d="M334.400 239.8L400 194.1" stroke="#959ba3" stroke-width="0.6"/><path d="M334.400 243.7L400 197.3" stroke="#959ba3" stroke-width="0.6"/><path d="M334.400 247.7L400 200.7" stroke="#959ba3" stroke-width="0.6"/><path d="M334.400 251.7L400 204.1" stroke="#858b93" stroke-width="0.9"/><path d="M334.400 255.9L400 207.6" stroke="#959ba3" stroke-width="0.6"/><path d="M334.400 260.2L400 211.3" stroke="#959ba3" stroke-width="0.6"/><path d="M334.400 264.7L400 215.0" stroke="#959ba3" stroke-width="0.6"/><path d="M334.400 269.2L400 218.8" stroke="#959ba3" stroke-width="0.6"/><path d="M334.400 273.9L400 222.8" stroke="#858b93" stroke-width="0.9"/><path d="M334.400 278.7L400 226.9" stroke="#959ba3" stroke-width="0.6"/><path d="M334.400 283.7L400 231.0" stroke="#959ba3" stroke-width="0.6"/><path d="M334.400 288.8L400 235.4" stroke="#959ba3" stroke-width="0.6"/><path d="M334.400 294.1L400 239.8" stroke="#959ba3" stroke-width="0.6"/><path d="M334.400 299.6L400 244.4" stroke="#858b93" stroke-width="0.9"/><path d="M334.400 305.2L400 249.1" stroke="#959ba3" stroke-width="0.6"/><path d="M334.400 311.0L400 254.0" stroke="#959ba3" stroke-width="0.6"/><path d="M334.400 317.0L400 259.1" stroke="#959ba3" stroke-width="0.6"/><path d="M334.400 323.2L400 264.3" stroke="#959ba3" stroke-width="0.6"/><path d="M334.400 329.6L400 269.7" stroke="#858b93" stroke-width="0.9"/><path d="M334.400 336.3L400 275.3" stroke="#959ba3" stroke-width="0.6"/><path d="M334.400 343.1L400 281.1" stroke="#959ba3" stroke-width="0.6"/><path d="M334.400 40.0L400 63.3" stroke="#959ba3" stroke-width="0.6"/><path d="M334.400 41.0L400 64.3" stroke="#959ba3" stroke-width="0.6"/><path d="M334.400 42.0L400 65.3" stroke="#959ba3" stroke-width="0.6"/><path d="M334.400 43.0L400 66.2" stroke="#858b93" stroke-width="0.9"/><path d="M334.400 44.0L400 67.3" stroke="#959ba3" stroke-width="0.6"/><path d="M334.400 45.0L400 68.3" stroke="#959ba3" stroke-width="0.6"/><path d="M334.400 46.0L400 69.3" stroke="#959ba3" stroke-width="0.6"/><path d="M334.400 47.0L400 70.3" stroke="#959ba3" stroke-width="0.6"/><path d="M334.400 48.1L400 71.4" stroke="#858b93" stroke-width="0.9"/><path d="M334.400 49.1L400 72.4" stroke="#959ba3" stroke-width="0.6"/><path d="M334.400 50.2L400 73.5" stroke="#959ba3" stroke-width="0.6"/><path d="M334.400 51.3L400 74.6" stroke="#959ba3" stroke-width="0.6"/><path d="M334.400 52.4L400 75.6" stroke="#959ba3" stroke-width="0.6"/><path d="M334.400 53.4L400 76.7" stroke="#858b93" stroke-width="0.9"/><path d="M334.400 54.6L400 77.8" stroke="#959ba3" stroke-width="0.6"/><path d="M334.400 55.7L400 79.0" stroke="#959ba3" stroke-width="0.6"/><path d="M334.400 56.8L400 80.1" stroke="#959ba3" stroke-width="0.6"/><path d="M334.400 57.9L400 81.2" stroke="#959ba3" stroke-width="0.6"/><path d="M334.400 59.1L400 82.4" stroke="#858b93" stroke-width="0.9"/><path d="M334.400 60.2L400 83.5" stroke="#959ba3" stroke-width="0.6"/><path d="M334.400 61.4L400 84.7" stroke="#959ba3" stroke-width="0.6"/><path d="M334.400 62.6L400 85.9" stroke="#959ba3" stroke-width="0.6"/><path d="M334.400 63.8L400 87.1" stroke="#959ba3" stroke-width="0.6"/><path d="M334.400 65.0L400 88.3" stroke="#858b93" stroke-width="0.9"/><path d="M334.400 66.2L400 89.5" stroke="#959ba3" stroke-width="0.6"/><path d="M334.400 67.4L400 90.7" stroke="#959ba3" stroke-width="0.6"/><path d="M334.400 68.7L400 92.0" stroke="#959ba3" stroke-width="0.6"/><path d="M334.400 69.9L400 93.2" stroke="#959ba3" stroke-width="0.6"/><path d="M334.400 71.2L400 94.5" stroke="#858b93" stroke-width="0.9"/><path d="M334.400 72.5L400 95.8" stroke="#959ba3" stroke-width="0.6"/><path d="M334.400 73.8L400 97.1" stroke="#959ba3" stroke-width="0.6"/><path d="M334.400 75.1L400 98.4" stroke="#959ba3" stroke-width="0.6"/><path d="M334.400 76.4L400 99.7" stroke="#959ba3" stroke-width="0.6"/><path d="M334.400 77.8L400 101.0" stroke="#858b93" stroke-width="0.9"/><path d="M334.400 79.1L400 102.4" stroke="#959ba3" stroke-width="0.6"/><path d="M334.400 80.5L400 103.8" stroke="#959ba3" stroke-width="0.6"/><path d="M334.400 81.9L400 105.1" stroke="#959ba3" stroke-width="0.6"/><path d="M334.400 83.2L400 106.5" stroke="#959ba3" stroke-width="0.6"/><path d="M334.400 84.7L400 107.9" stroke="#858b93" stroke-width="0.9"/><path d="M334.400 86.1L400 109.4" stroke="#959ba3" stroke-width="0.6"/><path d="M334.400 87.5L400 110.8" stroke="#959ba3" stroke-width="0.6"/><path d="M334.400 89.0L400 112.3" stroke="#959ba3" stroke-width="0.6"/><path d="M334.400 90.5L400 113.8" stroke="#959ba3" stroke-width="0.6"/><path d="M334.400 92.0L400 115.2" stroke="#858b93" stroke-width="0.9"/><path d="M334.400 93.5L400 116.7" stroke="#959ba3" stroke-width="0.6"/><path d="M334.400 95.0L400 118.3" stroke="#959ba3" stroke-width="0.6"/><path d="M334.400 96.5L400 119.8" stroke="#959ba3" stroke-width="0.6"/><path d="M334.400 98.1L400 121.4" stroke="#959ba3" stroke-width="0.6"/><path d="M334.400 99.7L400 123.0" stroke="#858b93" stroke-width="0.9"/><path d="M334.400 101.3L400 124.5" stroke="#959ba3" stroke-width="0.6"/><path d="M334.400 102.9L400 126.2" stroke="#959ba3" stroke-width="0.6"/><path d="M334.400 104.5L400 127.8" stroke="#959ba3" stroke-width="0.6"/><path d="M334.400 106.2L400 129.5" stroke="#959ba3" stroke-width="0.6"/><path d="M334.400 107.8L400 131.1" stroke="#858b93" stroke-width="0.9"/><path d="M334.400 109.5L400 132.8" stroke="#959ba3" stroke-width="0.6"/><path d="M334.400 111.2L400 134.5" stroke="#959ba3" stroke-width="0.6"/><path d="M334.400 113.0L400 136.3" stroke="#959ba3" stroke-width="0.6"/><path d="M334.400 114.7L400 138.0" stroke="#959ba3" stroke-width="0.6"/><path d="M334.400 116.5L400 139.8" stroke="#858b93" stroke-width="0.9"/><path d="M334.400 118.3L400 141.6" stroke="#959ba3" stroke-width="0.6"/><path d="M334.400 120.1L400 143.4" stroke="#959ba3" stroke-width="0.6"/><path d="M334.400 122.0L400 145.3" stroke="#959ba3" stroke-width="0.6"/><path d="M334.400 123.8L400 147.1" stroke="#959ba3" stroke-width="0.6"/><path d="M334.400 125.7L400 149.0" stroke="#858b93" stroke-width="0.9"/><path d="M334.400 127.6L400 150.9" stroke="#959ba3" stroke-width="0.6"/><path d="M334.400 129.6L400 152.9" stroke="#959ba3" stroke-width="0.6"/><path d="M334.400 131.5L400 154.8" stroke="#959ba3" stroke-width="0.6"/><path d="M334.400 133.5L400 156.8" stroke="#959ba3" stroke-width="0.6"/><path d="M334.400 135.5L400 158.8" stroke="#858b93" stroke-width="0.9"/><path d="M334.400 137.6L400 160.9" stroke="#959ba3" stroke-width="0.6"/><path d="M334.400 139.6L400 162.9" stroke="#959ba3" stroke-width="0.6"/><path d="M334.400 141.7L400 165.0" stroke="#959ba3" stroke-width="0.6"/><path d="M334.400 143.9L400 167.1" stroke="#959ba3" stroke-width="0.6"/><path d="M334.400 146.0L400 169.3" stroke="#858b93" stroke-width="0.9"/><path d="M334.400 148.2L400 171.5" stroke="#959ba3" stroke-width="0.6"/><path d="M334.400 150.4L400 173.7" stroke="#959ba3" stroke-width="0.6"/><path d="M334.400 152.6L400 175.9" stroke="#959ba3" stroke-width="0.6"/><path d="M334.400 154.9L400 178.2" stroke="#959ba3" stroke-width="0.6"/><path d="M334.400 157.2L400 180.5" stroke="#858b93" stroke-width="0.9"/><path d="M334.400 159.6L400 182.8" stroke="#959ba3" stroke-width="0.6"/><path d="M334.400 161.9L400 185.2" stroke="#959ba3" stroke-width="0.6"/><path d="M334.400 164.3L400 187.6" stroke="#959ba3" stroke-width="0.6"/><path d="M334.400 166.8L400 190.0" stroke="#959ba3" stroke-width="0.6"/><path d="M334.400 169.2L400 192.5" stroke="#858b93" stroke-width="0.9"/><path d="M334.400 171.7L400 195.0" stroke="#959ba3" stroke-width="0.6"/><path d="M334.400 174.3L400 197.6" stroke="#959ba3" stroke-width="0.6"/><path d="M334.400 176.9L400 200.1" stroke="#959ba3" stroke-width="0.6"/><path d="M334.400 179.5L400 202.8" stroke="#959ba3" stroke-width="0.6"/><path d="M334.400 182.1L400 205.4" stroke="#858b93" stroke-width="0.9"/><path d="M334.400 184.8L400 208.1" stroke="#959ba3" stroke-width="0.6"/><path d="M334.400 187.6L400 210.9" stroke="#959ba3" stroke-width="0.6"/><path d="M334.400 190.4L400 213.6" stroke="#959ba3" stroke-width="0.6"/><path d="M334.400 193.2L400 216.5" stroke="#959ba3" stroke-width="0.6"/><path d="M334.400 196.0L400 219.3" stroke="#858b93" stroke-width="0.9"/><path d="M334.400 199.0L400 222.2" stroke="#959ba3" stroke-width="0.6"/><path d="M334.400 201.9L400 225.2" stroke="#959ba3" stroke-width="0.6"/><path d="M334.400 204.9L400 228.2" stroke="#959ba3" stroke-width="0.6"/><path d="M334.400 208.0L400 231.3" stroke="#959ba3" stroke-width="0.6"/><path d="M334.400 211.1L400 234.4" stroke="#858b93" stroke-width="0.9"/><path d="M334.400 214.2L400 237.5" stroke="#959ba3" stroke-width="0.6"/><path d="M334.400 217.4L400 240.7" stroke="#959ba3" stroke-width="0.6"/><path d="M334.400 220.7L400 244.0" stroke="#959ba3" stroke-width="0.6"/><path d="M334.400 224.0L400 247.3" stroke="#959ba3" stroke-width="0.6"/><path d="M334.400 227.4L400 250.7" stroke="#858b93" stroke-width="0.9"/><path d="M334.400 230.8L400 254.1" stroke="#959ba3" stroke-width="0.6"/><path d="M334.400 234.3L400 257.6" stroke="#959ba3" stroke-width="0.6"/><path d="M334.400 237.8L400 261.1" stroke="#959ba3" stroke-width="0.6"/><path d="M334.400 241.4L400 264.7" stroke="#959ba3" stroke-width="0.6"/><path d="M334.400 245.1L400 268.4" stroke="#858b93" stroke-width="0.9"/><path d="M334.400 248.8L400 272.1" stroke="#959ba3" stroke-width="0.6"/><path d="M334.400 252.6L400 275.9" stroke="#959ba3" stroke-width="0.6"/><path d="M334.400 256.5L400 279.8" stroke="#959ba3" stroke-width="0.6"/><path d="M334.400 260.5L400 283.7" stroke="#959ba3" stroke-width="0.6"/><path d="M334.400 264.5L400 287.8" stroke="#858b93" stroke-width="0.9"/><path d="M334.400 268.6L400 291.8" stroke="#959ba3" stroke-width="0.6"/><path d="M334.400 272.7L400 296.0" stroke="#959ba3" stroke-width="0.6"/><path d="M334.400 277.0L400 300.2" stroke="#959ba3" stroke-width="0.6"/></g><path d="M353 238.500V253.200L366 257.400M353 253.200L361.500 246.800" fill="none" stroke="#4a4e55" stroke-width="0.8"/></svg>
<div style="left:334.3px;top:86px;width:47px;height:9.6px;background:#9fbbe0;border-radius:0 0 1.5px 0;"></div>
<span class="t" style="left:338.3px;top:86.10px;color:#000;font-size:6.7px;transform:scaleX(0.89);font-weight:bold;">Perspective</span>
<div style="left:374.7px;top:87.2px;width:0.7px;height:7.4px;background:#555;"></div>
<svg style="left:376.1px;top:89.4px" width="4" height="3" viewBox="0 0 4 3"><path d="M0 0h4l-2 2.600z" fill="#222"/></svg>
<span class="t" style="left:354.5px;top:233.00px;color:#4a4e55;font-size:7px;transform:scaleX(0.89);">z</span>
<span class="t" style="left:362px;top:240.50px;color:#4a4e55;font-size:7px;transform:scaleX(0.89);">y</span>
<span class="t" style="left:367px;top:253.00px;color:#4a4e55;font-size:7px;transform:scaleX(0.89);">x</span>
<div style="left:34px;top:272.5px;width:598px;height:2px;background:#f4f6fa;"></div>
<div style="left:332px;top:86px;width:2.2px;height:374px;background:#f4f6fa;"></div>
<div style="left:632px;top:85px;width:3.4px;height:376px;background:#ebedf3;"></div>
<div style="left:34px;top:86px;width:24.8px;height:9.6px;background:#d3d6db;border-radius:0 0 1.5px 0;"></div>
<span class="t" style="left:38px;top:86.10px;color:#000;font-size:6.7px;transform:scaleX(0.89);">Top</span>
<div style="left:52.199999999999996px;top:87.2px;width:0.7px;height:7.4px;background:#888;"></div>
<svg style="left:53.599999999999994px;top:89.4px" width="4" height="3" viewBox="0 0 4 3"><path d="M0 0h4l-2 2.600z" fill="#222"/></svg>
<svg style="left:50.7px;top:233.2px" width="30" height="26" viewBox="0 0 30 26"><path d="M2.400 6.500V21.400H17" fill="none" stroke="#5b5f66" stroke-width="0.8"/></svg>
<span class="t" style="left:54.300000000000004px;top:231.50px;color:#4a4e55;font-size:7px;transform:scaleX(0.89);">y</span>
<span class="t" style="left:70.1px;top:248.10px;color:#4a4e55;font-size:7px;transform:scaleX(0.89);">x</span>
<div style="left:34px;top:274.5px;width:28px;height:9.6px;background:#d3d6db;border-radius:0 0 1.5px 0;"></div>
<span class="t" style="left:38px;top:274.60px;color:#000;font-size:6.7px;transform:scaleX(0.89);">Front</span>
<div style="left:55.4px;top:275.7px;width:0.7px;height:7.4px;background:#888;"></div>
<svg style="left:56.8px;top:277.9px" width="4" height="3" viewBox="0 0 4 3"><path d="M0 0h4l-2 2.600z" fill="#222"/></svg>
<svg style="left:50.7px;top:420.8px" width="30" height="26" viewBox="0 0 30 26"><path d="M2.400 6.500V21.400H17" fill="none" stroke="#5b5f66" stroke-width="0.8"/></svg>
<span class="t" style="left:54.300000000000004px;top:419.10px;color:#4a4e55;font-size:7px;transform:scaleX(0.89);">z</span>
<span class="t" style="left:70.1px;top:435.70px;color:#4a4e55;font-size:7px;transform:scaleX(0.89);">x</span>
<div style="left:334.2px;top:274.5px;width:27px;height:9.6px;background:#d3d6db;border-radius:0 0 1.5px 0;"></div>
<span class="t" style="left:338.2px;top:274.60px;color:#000;font-size:6.7px;transform:scaleX(0.89);">Right</span>
<div style="left:354.59999999999997px;top:275.7px;width:0.7px;height:7.4px;background:#888;"></div>
<svg style="left:356.0px;top:277.9px" width="4" height="3" viewBox="0 0 4 3"><path d="M0 0h4l-2 2.600z" fill="#222"/></svg>
<svg style="left:350.3px;top:420.8px" width="30" height="26" viewBox="0 0 30 26"><path d="M2.400 6.500V21.400H17" fill="none" stroke="#5b5f66" stroke-width="0.8"/></svg>
<span class="t" style="left:353.90000000000003px;top:419.10px;color:#4a4e55;font-size:7px;transform:scaleX(0.89);">z</span>
<span class="t" style="left:369.7px;top:435.70px;color:#4a4e55;font-size:7px;transform:scaleX(0.89);">y</span>
<div style="left:633px;top:54.5px;width:249px;height:434px;background:#ebedf3;"></div>
<div style="left:635.4px;top:65.1px;width:245.4px;height:1.5px;background:#dde3ee;"></div>
<svg style="left:873px;top:57.200px" width="7.5" height="7.5" viewBox="0 0 7.5 7.5"><circle cx="3.750" cy="3.750" r="3" fill="#f7f7f7" stroke="#8a8a8a" stroke-width="0.6"/><path d="M3.750 2.200v3.100M2.200 3.750h3.100" stroke="#999" stroke-width="0.5"/></svg>
<div style="left:635.4px;top:87.4px;width:245.4px;height:1.6px;background:#dfe4ee;"></div>
<svg style="left:805px;top:89.200px" width="32" height="11" viewBox="0 0 32 11"><path d="M0 11V0.500H23Q25 0.500 26 2L31 11Z" fill="#dcdee4" stroke="#cfd4de" stroke-width="0.5"/></svg>
<svg style="left:835.500px;top:89.200px" width="40" height="11" viewBox="0 0 40 11"><path d="M0 11L2 2Q2.500 0.500 4 0.500H29Q31 0.500 32 2L38 11Z" fill="#dcdee4" stroke="#cfd4de" stroke-width="0.5"/></svg>
<span class="t" style="left:814.9px;top:90.80px;color:#000;font-size:6.7px;transform:scaleX(0.84);">Prope...</span>
<svg style="left:838.500px;top:91.300px" width="9" height="8" viewBox="0 0 9 8"><path d="M0.500 5.500Q0.500 0.800 4.500 0.800Q8.500 0.800 8.500 5.500Q4.500 8.600 0.500 5.500Z" fill="#1d7fd0" stroke="#234" stroke-width="0.5"/><path d="M1 5.600Q4.500 2.500 8 5.600Q4.500 8 1 5.600Z" fill="#35c4a0"/></svg>
<span class="t" style="left:848.3px;top:90.80px;color:#000;font-size:6.7px;transform:scaleX(0.84);">Envir...</span>
<svg style="left:873px;top:91.500px" width="8" height="8" viewBox="0 0 8 8"><circle cx="4" cy="4" r="2.300" fill="none" stroke="#bcbfc6" stroke-width="1.700" stroke-dasharray="1.300 0.500"/><circle cx="4" cy="4" r="1.800" fill="none" stroke="#bcbfc6" stroke-width="1"/></svg>
<div style="left:635.4px;top:100px;width:245.4px;height:1.2px;background:#e4e8f0;"></div>
<div style="left:880.8px;top:54.5px;width:1.2px;height:415px;background:#fafbfd;"></div>
<div style="left:635.4px;top:100.2px;width:246.6px;height:368.4px;background:#fff;"></div>
<div style="left:635.4px;top:112.4px;width:246.6px;height:0.7px;background:#e4e6ea;"></div>
<div style="left:635.4px;top:124.6px;width:246.6px;height:0.7px;background:#ececec;"></div>
<div style="left:844.6px;top:113px;width:0.7px;height:11.6px;background:#dcdcdc;"></div>
<div style="left:853px;top:113px;width:0.7px;height:11.6px;background:#dcdcdc;"></div>
<span class="t" style="left:811.6px;top:114.50px;color:#333;font-size:6.7px;transform:scaleX(0.89);">netype</span>
<span class="t" style="left:856px;top:114.50px;color:#333;font-size:6.7px;transform:scaleX(0.89);">Print Width</span>
<span class="t" style="left:811.6px;top:125.90px;color:#000;font-size:6.7px;transform:scaleX(0.89);font-weight:bold;">ntinuous</span>
<svg style="left:846.300px;top:127.600px" width="6" height="6" viewBox="0 0 6 6"><path d="M3 0.200L5.800 3 3 5.800 0.200 3Z" fill="#000"/></svg>
<span class="t" style="left:855.5px;top:125.90px;color:#000;font-size:6.7px;transform:scaleX(0.89);font-weight:bold;">Default</span>
<div style="left:635.5px;top:462.2px;width:246.5px;height:6.8px;background:#f0f0f0;"></div>
<div style="left:635.5px;top:462.2px;width:9.3px;height:6.8px;background:#fff;"></div>
<div style="left:645px;top:462.2px;width:212.4px;height:6.8px;background:#cdcdcd;"></div>
<svg style="left:637.500px;top:463.300px" width="5" height="5" viewBox="0 0 5 5"><path d="M3.400 0.600L1.400 2.500L3.400 4.400" fill="none" stroke="#222" stroke-width="1.1"/></svg>
<svg style="left:872.500px;top:463.300px" width="5" height="5" viewBox="0 0 5 5"><path d="M1.600 0.600L3.600 2.500L1.600 4.400" fill="none" stroke="#333" stroke-width="0.8"/></svg>
<div style="left:633px;top:468.8px;width:249px;height:18px;background:#ebedf3;"></div>
<div style="left:34px;top:460.5px;width:600px;height:12px;background:#ebedf3;"></div>
<svg style="left:34.00px;top:460.400px" width="41.00" height="10.600" viewBox="0 0 41.00 10.600"><path d="M0 0H41.00L38.50 8.500Q38.00 10.200 36.50 10.200H4.500Q3 10.200 2.500 8.500Z" fill="#f5f6fa" stroke="#cdd1da" stroke-width="0.5"/></svg>
<span class="t" style="left:38.5px;top:461.80px;color:#000;font-size:6.7px;transform:scaleX(0.89);">Perspective</span>
<svg style="left:73.50px;top:460.400px" width="18.50" height="10.600" viewBox="0 0 18.50 10.600"><path d="M0 0H18.50L16.00 8.500Q15.50 10.200 14.00 10.200H4.500Q3 10.200 2.500 8.500Z" fill="#d8dadf" stroke="#cdd1da" stroke-width="0.5"/></svg>
<span class="t" style="left:78px;top:461.80px;color:#000;font-size:6.7px;transform:scaleX(0.89);">Top</span>
<svg style="left:90.70px;top:460.400px" width="24.00" height="10.600" viewBox="0 0 24.00 10.600"><path d="M0 0H24.00L21.50 8.500Q21.00 10.200 19.50 10.200H4.500Q3 10.200 2.500 8.500Z" fill="#d8dadf" stroke="#cdd1da" stroke-width="0.5"/></svg>
<span class="t" style="left:95.2px;top:461.80px;color:#000;font-size:6.7px;transform:scaleX(0.89);">Front</span>
<svg style="left:112.50px;top:460.400px" width="24.00" height="10.600" viewBox="0 0 24.00 10.600"><path d="M0 0H24.00L21.50 8.500Q21.00 10.200 19.50 10.200H4.500Q3 10.200 2.500 8.500Z" fill="#d8dadf" stroke="#cdd1da" stroke-width="0.5"/></svg>
<span class="t" style="left:117px;top:461.80px;color:#000;font-size:6.7px;transform:scaleX(0.89);">Right</span>
<svg style="left:139px;top:463.300px" width="6" height="6" viewBox="0 0 6 6"><path d="M3 0.500L3.700 2.300L5.500 3L3.700 3.700L3 5.500L2.300 3.700L0.500 3L2.300 2.300Z" fill="none" stroke="#555" stroke-width="0.6"/></svg>
<div style="left:1px;top:472.6px;width:881px;height:14.2px;background:#ebedf3;"></div>
<div style="left:5.4px;top:476.1px;width:7px;height:7px;background:#fff;border:0.8px solid #5a5a5a;border-radius:0.8px;"></div>
<svg style="left:5.4px;top:476.100px" width="7" height="7" viewBox="0 0 7 7"><path d="M1.500 3.500L3 5L5.600 1.800" fill="none" stroke="#333" stroke-width="0.8"/></svg>
<span class="t" style="left:14px;top:475.40px;color:#000;font-size:6.7px;transform:scaleX(0.89);">End</span>
<div style="left:27.7px;top:476.1px;width:7px;height:7px;background:#fff;border:0.8px solid #5a5a5a;border-radius:0.8px;"></div>
<span class="t" style="left:35.4px;top:475.40px;color:#000;font-size:6.7px;transform:scaleX(0.89);">Near</span>
<div style="left:51.7px;top:476.1px;width:7px;height:7px;background:#fff;border:0.8px solid #5a5a5a;border-radius:0.8px;"></div>
<svg style="left:51.7px;top:476.100px" width="7" height="7" viewBox="0 0 7 7"><path d="M1.500 3.500L3 5L5.600 1.800" fill="none" stroke="#333" stroke-width="0.8"/></svg>
<span class="t" style="left:60px;top:475.40px;color:#000;font-size:6.7px;transform:scaleX(0.89);">Point</span>
<div style="left:78px;top:476.1px;width:7px;height:7px;background:#fff;border:0.8px solid #5a5a5a;border-radius:0.8px;"></div>
<span class="t" style="left:86px;top:475.40px;color:#000;font-size:6.7px;transform:scaleX(0.89);">Mid</span>
<div style="left:101px;top:476.1px;width:7px;height:7px;background:#fff;border:0.8px solid #5a5a5a;border-radius:0.8px;"></div>
<span class="t" style="left:109.3px;top:475.40px;color:#000;font-size:6.7px;transform:scaleX(0.89);">Cen</span>
<div style="left:123.8px;top:476.1px;width:7px;height:7px;background:#fff;border:0.8px solid #5a5a5a;border-radius:0.8px;"></div>
<span class="t" style="left:132px;top:475.40px;color:#000;font-size:6.7px;transform:scaleX(0.89);">Int</span>
<div style="left:142.9px;top:476.1px;width:7px;height:7px;background:#fff;border:0.8px solid #5a5a5a;border-radius:0.8px;"></div>
<span class="t" style="left:151px;top:475.40px;color:#000;font-size:6.7px;transform:scaleX(0.89);">Perp</span>
<div style="left:166.4px;top:476.1px;width:7px;height:7px;background:#fff;border:0.8px solid #5a5a5a;border-radius:0.8px;"></div>
<span class="t" style="left:174.6px;top:475.40px;color:#000;font-size:6.7px;transform:scaleX(0.89);">Tan</span>
<div style="left:189.6px;top:476.1px;width:7px;height:7px;background:#fff;border:0.8px solid #5a5a5a;border-radius:0.8px;"></div>
<span class="t" style="left:197px;top:475.40px;color:#000;font-size:6.7px;transform:scaleX(0.89);">Quad</span>
<div style="left:215.9px;top:476.1px;width:7px;height:7px;background:#fff;border:0.8px solid #5a5a5a;border-radius:0.8px;"></div>
<span class="t" style="left:224px;top:475.40px;color:#000;font-size:6.7px;transform:scaleX(0.89);">Knot</span>
<div style="left:240px;top:476.1px;width:7px;height:7px;background:#fff;border:0.8px solid #5a5a5a;border-radius:0.8px;"></div>
<span class="t" style="left:248.5px;top:475.40px;color:#000;font-size:6.7px;transform:scaleX(0.89);">Vertex</span>
<div style="left:269px;top:476.1px;width:7px;height:7px;background:#fff;border:0.8px solid #3a62b0;"></div>
<div style="left:270.6px;top:477.7px;width:3.8px;height:3.8px;background:#3a62b0;"></div>
<span class="t" style="left:276.6px;top:475.40px;color:#000;font-size:6.7px;transform:scaleX(0.89);">Project</span>
<div style="left:303.9px;top:476.1px;width:7px;height:7px;background:#e6e6e6;border:0.8px solid #bbb;"></div>
<span class="t" style="left:312px;top:475.40px;color:#555;font-size:6.7px;transform:scaleX(0.89);">Disable</span>
<div style="left:1px;top:487.4px;width:881px;height:10.6px;background:#eceef3;"></div>
<div style="left:0px;top:486.8px;width:882px;height:0.9px;background:#d3dae7;"></div>
<div style="left:0px;top:497.3px;width:882px;height:0.7px;background:#ddd2bf;"></div>
<div style="left:867px;top:487.4px;width:0.7px;height:10.6px;background:#c9cedb;"></div>
<span class="t" style="left:1.6px;top:488.10px;color:#000;font-size:6.7px;transform:scaleX(0.89);">Display Rhino options</span>
<div style="left:219.2px;top:25.6px;width:112.3px;height:227.6px;background:#f2f2f2;border:1.200px solid #fbfbfb;box-shadow:0 0 0 0.5px #b5b5b5,1.500px 1.500px 2px rgba(0,0,0,0.40);"></div>
<div style="left:221px;top:240.8px;width:108.8px;height:10.7px;background:#91c9f7;"></div>
<span class="t" style="left:237px;top:28.20px;color:#000;font-size:6.7px;transform:scaleX(0.89);">Object Snap</span>
<svg style="left:322px;top:30.200000000000003px" width="4" height="5" viewBox="0 0 4 5"><path d="M1 0.500L3 2.500L1 4.500" fill="none" stroke="#333" stroke-width="0.7"/></svg>
<span class="t" style="left:237px;top:39.50px;color:#000;font-size:6.7px;transform:scaleX(0.89);">3-D Digitizer</span>
<svg style="left:322px;top:41.5px" width="4" height="5" viewBox="0 0 4 5"><path d="M1 0.500L3 2.500L1 4.500" fill="none" stroke="#333" stroke-width="0.7"/></svg>
<div style="left:235.6px;top:51.0px;width:93.8px;height:1px;background:#d9d9d9;"></div>
<span class="t" style="left:237px;top:54.50px;color:#000;font-size:6.7px;transform:scaleX(0.89);">Commands</span>
<svg style="left:322px;top:56.5px" width="4" height="5" viewBox="0 0 4 5"><path d="M1 0.500L3 2.500L1 4.500" fill="none" stroke="#333" stroke-width="0.7"/></svg>
<div style="left:235.6px;top:66.1px;width:93.8px;height:1px;background:#d9d9d9;"></div>
<span class="t" style="left:237px;top:69.40px;color:#000;font-size:6.7px;transform:scaleX(0.89);">RhinoScript</span>
<svg style="left:322px;top:71.4px" width="4" height="5" viewBox="0 0 4 5"><path d="M1 0.500L3 2.500L1 4.500" fill="none" stroke="#333" stroke-width="0.7"/></svg>
<span class="t" style="left:237px;top:80.70px;color:#000;font-size:6.7px;transform:scaleX(0.89);">PythonScript</span>
<svg style="left:322px;top:82.7px" width="4" height="5" viewBox="0 0 4 5"><path d="M1 0.500L3 2.500L1 4.500" fill="none" stroke="#333" stroke-width="0.7"/></svg>
<span class="t" style="left:237px;top:92.00px;color:#000;font-size:6.7px;transform:scaleX(0.89);">Grasshopper</span>
<span class="t" style="left:237px;top:103.30px;color:#000;font-size:6.7px;transform:scaleX(0.89);">Repeat Command Script</span>
<div style="left:235.6px;top:115.1px;width:93.8px;height:1px;background:#d9d9d9;"></div>
<span class="t" style="left:237px;top:118.20px;color:#000;font-size:6.7px;transform:scaleX(0.89);">Toolbar Layout...</span>
<div style="left:235.6px;top:130.2px;width:93.8px;height:1px;background:#d9d9d9;"></div>
<span class="t" style="left:237px;top:132.90px;color:#000;font-size:6.7px;transform:scaleX(0.89);">License Manager</span>
<span class="t" style="left:237px;top:144.20px;color:#000;font-size:6.7px;transform:scaleX(0.89);">File Utilities</span>
<svg style="left:322px;top:146.2px" width="4" height="5" viewBox="0 0 4 5"><path d="M1 0.500L3 2.500L1 4.500" fill="none" stroke="#333" stroke-width="0.7"/></svg>
<span class="t" style="left:237px;top:155.40px;color:#000;font-size:6.7px;transform:scaleX(0.89);">Hyperlink</span>
<svg style="left:322px;top:157.4px" width="4" height="5" viewBox="0 0 4 5"><path d="M1 0.500L3 2.500L1 4.500" fill="none" stroke="#333" stroke-width="0.7"/></svg>
<span class="t" style="left:237px;top:166.90px;color:#000;font-size:6.7px;transform:scaleX(0.89);">Web Browser</span>
<div style="left:235.6px;top:178.2px;width:93.8px;height:1px;background:#d9d9d9;"></div>
<span class="t" style="left:237px;top:181.80px;color:#000;font-size:6.7px;transform:scaleX(0.89);">Calculator...</span>
<span class="t" style="left:237px;top:192.70px;color:#000;font-size:6.7px;transform:scaleX(0.89);">RPN Calculator...</span>
<span class="t" style="left:237px;top:204.30px;color:#000;font-size:6.7px;transform:scaleX(0.89);">Attach GHS Data...</span>
<div style="left:235.6px;top:216.1px;width:93.8px;height:1px;background:#d9d9d9;"></div>
<span class="t" style="left:237px;top:219.20px;color:#000;font-size:6.7px;transform:scaleX(0.89);">Export Options...</span>
<span class="t" style="left:237px;top:230.40px;color:#000;font-size:6.7px;transform:scaleX(0.89);">Import Options...</span>
<span class="t" style="left:237px;top:241.60px;color:#000;font-size:6.7px;transform:scaleX(0.89);">Options...</span>
<div style="left:396.3px;top:54.2px;width:415.6px;height:347.8px;background:#f0f0f0;border:1.200px solid #e2d5be;box-shadow:0 0.5px 2px rgba(0,0,0,0.15);"></div>
<div style="left:397.5px;top:55.400000000000006px;width:413.20000000000005px;height:15px;background:#fff;"></div>
<svg style="left:401.200px;top:57.800px" width="9" height="8.600" viewBox="0 0 9 9"><rect width="9" height="9" fill="#111"/><path d="M1.200 4.600L2.400 2.200L3.600 2L4.400 3.400L6.200 5L7.400 5.200L6.400 7.600L4.400 7.400L3.400 5.800L1.800 5.600Z" fill="#fff"/><path d="M5.600 1.200L7.600 1.400L7.200 3.200L6 2.800Z" fill="#ddd"/></svg>
<span class="t" style="left:412px;top:58.10px;color:#000;font-size:6.7px;transform:scaleX(0.89);">Rhino Options</span>
<svg style="left:799.500px;top:59px" width="7" height="7" viewBox="0 0 7 7"><path d="M0.800 0.800L6 6M6 0.800L0.800 6" stroke="#222" stroke-width="0.8" fill="none"/></svg>
<svg style="left:803.500px;top:394.500px" width="6.500" height="6.500" viewBox="0 0 6.5 6.5"><path d="M6 1L1 6M6 3L3 6M6 5L5 6" stroke="#b8b8b8" stroke-width="0.7"/></svg>
<div style="left:403px;top:78.8px;width:118.2px;height:298px;background:#fff;border:0.8px solid #c9ccd2;border-top-color:#7f858e;"></div>
<span class="t" style="left:415.2px;top:79.70px;color:#000;font-size:6.7px;transform:scaleX(0.89);">Grid</span>
<span class="t" style="left:415.2px;top:88.97px;color:#000;font-size:6.7px;transform:scaleX(0.89);">Hatch</span>
<span class="t" style="left:415.2px;top:98.24px;color:#000;font-size:6.7px;transform:scaleX(0.89);">Linetypes</span>
<span class="t" style="left:415.2px;top:107.51px;color:#000;font-size:6.7px;transform:scaleX(0.89);">Location</span>
<span class="t" style="left:415.2px;top:116.78px;color:#000;font-size:6.7px;transform:scaleX(0.89);">Mesh</span>
<span class="t" style="left:415.2px;top:126.05px;color:#000;font-size:6.7px;transform:scaleX(0.89);">Notes</span>
<span class="t" style="left:415.2px;top:135.32px;color:#000;font-size:6.7px;transform:scaleX(0.89);">Render</span>
<svg style="left:408.600px;top:146.79px" width="4" height="5" viewBox="0 0 4 5"><path d="M1 0.500L3 2.500L1 4.500" fill="none" stroke="#555" stroke-width="0.7"/></svg>
<span class="t" style="left:415.2px;top:144.59px;color:#000;font-size:6.7px;transform:scaleX(0.89);">Units</span>
<span class="t" style="left:415.2px;top:153.86px;color:#000;font-size:6.7px;transform:scaleX(0.89);">User Text</span>
<span class="t" style="left:415.2px;top:163.13px;color:#000;font-size:6.7px;transform:scaleX(0.89);">Web Browser</span>
<span class="t" style="left:407px;top:172.40px;color:#000;font-size:6.7px;transform:scaleX(0.86);font-weight:bold;">Rhino Options</span>
<span class="t" style="left:415.2px;top:181.67px;color:#000;font-size:6.7px;transform:scaleX(0.89);">Advanced</span>
<span class="t" style="left:415.2px;top:190.94px;color:#000;font-size:6.7px;transform:scaleX(0.89);">Alerter</span>
<span class="t" style="left:415.2px;top:200.21px;color:#000;font-size:6.7px;transform:scaleX(0.89);">Aliases</span>
<svg style="left:408.600px;top:211.68px" width="4" height="5" viewBox="0 0 4 5"><path d="M1 0.500L3 2.500L1 4.500" fill="none" stroke="#555" stroke-width="0.7"/></svg>
<span class="t" style="left:415.2px;top:209.48px;color:#000;font-size:6.7px;transform:scaleX(0.89);">Appearance</span>
<svg style="left:408.600px;top:220.95px" width="4" height="5" viewBox="0 0 4 5"><path d="M1 0.500L3 2.500L1 4.500" fill="none" stroke="#555" stroke-width="0.7"/></svg>
<span class="t" style="left:415.2px;top:218.75px;color:#000;font-size:6.7px;transform:scaleX(0.89);">Context Menu</span>
<span class="t" style="left:415.2px;top:228.02px;color:#000;font-size:6.7px;transform:scaleX(0.89);">Cycles</span>
<svg style="left:408.600px;top:239.49px" width="4" height="5" viewBox="0 0 4 5"><path d="M1 0.500L3 2.500L1 4.500" fill="none" stroke="#555" stroke-width="0.7"/></svg>
<span class="t" style="left:415.2px;top:237.29px;color:#000;font-size:6.7px;transform:scaleX(0.89);">Files</span>
<span class="t" style="left:415.2px;top:246.56px;color:#000;font-size:6.7px;transform:scaleX(0.89);">General</span>
<span class="t" style="left:415.2px;top:255.83px;color:#000;font-size:6.7px;transform:scaleX(0.89);">Idle Processor</span>
<span class="t" style="left:415.2px;top:265.10px;color:#000;font-size:6.7px;transform:scaleX(0.89);">Keyboard</span>
<span class="t" style="left:415.2px;top:274.37px;color:#000;font-size:6.7px;transform:scaleX(0.89);">Libraries</span>
<span class="t" style="left:415.2px;top:283.64px;color:#000;font-size:6.7px;transform:scaleX(0.89);">Licenses</span>
<svg style="left:408.600px;top:295.11px" width="4" height="5" viewBox="0 0 4 5"><path d="M1 0.500L3 2.500L1 4.500" fill="none" stroke="#555" stroke-width="0.7"/></svg>
<span class="t" style="left:415.2px;top:292.91px;color:#000;font-size:6.7px;transform:scaleX(0.89);">Modeling Aids</span>
<span class="t" style="left:415.2px;top:302.18px;color:#000;font-size:6.7px;transform:scaleX(0.89);">Mouse</span>
<span class="t" style="left:415.2px;top:311.45px;color:#000;font-size:6.7px;transform:scaleX(0.89);">Plug-ins</span>
<span class="t" style="left:415.2px;top:320.72px;color:#000;font-size:6.7px;transform:scaleX(0.89);">Rhino Render Options</span>
<span class="t" style="left:415.2px;top:329.99px;color:#000;font-size:6.7px;transform:scaleX(0.89);">RhinoScript</span>
<span class="t" style="left:415.2px;top:339.26px;color:#000;font-size:6.7px;transform:scaleX(0.89);">Selection Menu</span>
<div style="left:404.2px;top:348.33px;width:107.8px;height:9.3px;background:#d9d9d9;"></div>
<svg style="left:408.600px;top:350.73px" width="4" height="5" viewBox="0 0 4 5"><path d="M1 0.500L3 2.500L1 4.500" fill="none" stroke="#555" stroke-width="0.7"/></svg>
<span class="t" style="left:415.2px;top:348.53px;color:#000;font-size:6.7px;transform:scaleX(0.89);">Toolbars</span>
<span class="t" style="left:415.2px;top:357.80px;color:#000;font-size:6.7px;transform:scaleX(0.89);">Updates and Statistics</span>
<svg style="left:408.600px;top:369.27px" width="4" height="5" viewBox="0 0 4 5"><path d="M1 0.500L3 2.500L1 4.500" fill="none" stroke="#555" stroke-width="0.7"/></svg>
<span class="t" style="left:415.2px;top:367.07px;color:#000;font-size:6.7px;transform:scaleX(0.89);">View</span>
<div style="left:512px;top:79.6px;width:7px;height:296.4px;background:#f0f0f0;"></div>
<div style="left:512px;top:105.4px;width:7px;height:261.5px;background:#cdcdcd;"></div>
<svg style="left:512.900px;top:82.200px" width="5.500" height="5" viewBox="0 0 5.5 5"><path d="M0.700 3.700L2.750 1.500L4.800 3.700" fill="none" stroke="#1a1a1a" stroke-width="1.200"/></svg>
<svg style="left:512.900px;top:369.400px" width="5.500" height="5" viewBox="0 0 5.5 5"><path d="M0.700 1.300L2.750 3.500L4.800 1.300" fill="none" stroke="#1a1a1a" stroke-width="1.200"/></svg>
<span class="t" style="left:533.5px;top:78.50px;color:#000;font-size:6.7px;transform:scaleX(0.89);">File</span>
<span class="t" style="left:552.6px;top:78.50px;color:#000;font-size:6.7px;transform:scaleX(0.89);">Edit</span>
<span class="t" style="left:572.7px;top:78.50px;color:#000;font-size:6.7px;transform:scaleX(0.89);">Tools</span>
<span class="t" style="left:530px;top:94.50px;color:#000;font-size:6.7px;transform:scaleX(0.89);">Files</span>
<div style="left:545px;top:99.2px;width:256px;height:0.7px;background:#d0d0d0;"></div>
<div style="left:528.8px;top:107.3px;width:272.4px;height:40.4px;background:#fff;border:0.8px solid #c9ccd2;border-top-color:#7f858e;"></div>
<div style="left:529.6px;top:108.2px;width:270.8px;height:7.8px;background:#0078d7;"></div>
<span class="t" style="left:531px;top:107.70px;color:#fff;font-size:6.7px;transform:scaleX(0.89);">default</span>
<span class="t" style="left:530px;top:147.80px;color:#000;font-size:6.7px;transform:scaleX(0.9256716417910448);">C:\Users\Peter Chamberlain\AppData\Roaming\McNeel\Rhinoceros\6.0\UI\default.rui</span>
<span class="t" style="left:530px;top:158.80px;color:#000;font-size:6.7px;transform:scaleX(0.89);">Toolbars</span>
<div style="left:555px;top:164px;width:246px;height:0.7px;background:#d0d0d0;"></div>
<div style="left:528.5px;top:173.6px;width:272px;height:198.4px;background:#fff;border:0.8px solid #c9ccd2;border-top-color:#7f858e;"></div>
<div style="left:530px;top:244.3px;width:261.6px;height:8.6px;background:#c3dff6;border:0.8px solid #86bfee;border-left:none;border-right:none;"></div>
<div style="left:530.6px;top:176.79999999999998px;width:6.4px;height:6.4px;background:#fff;border:0.7px solid #cbcbcb;"></div>
<svg style="left:539px;top:176.10px" width="8" height="8" viewBox="0 0 8 8"><rect width="8" height="8" fill="#555"/><circle cx="4" cy="4" r="3.200" fill="#ddd"/><circle cx="3.200" cy="3" r="1.300" fill="#fff"/><path d="M1 5.500Q4 8.500 7 5.500Q4 6.800 1 5.500Z" fill="#222"/></svg>
<span class="t" style="left:550px;top:175.60px;color:#000;font-size:6.7px;transform:scaleX(0.89);">Display</span>
<div style="left:530.6px;top:186.54px;width:6.4px;height:6.4px;background:#fff;border:0.7px solid #cbcbcb;"></div>
<svg style="left:539px;top:185.84px" width="8" height="8" viewBox="0 0 8 8"><rect x="1" y="0.500" width="6" height="7" fill="#fff" stroke="#333" stroke-width="0.7"/><path d="M2.500 2.800H5.500M2.500 5.200H5.500" stroke="#333" stroke-width="0.6"/></svg>
<span class="t" style="left:550px;top:185.34px;color:#000;font-size:6.7px;transform:scaleX(0.89);">Drafting</span>
<div style="left:530.6px;top:196.27999999999997px;width:6.4px;height:6.4px;background:#fff;border:0.7px solid #cbcbcb;"></div>
<svg style="left:539px;top:195.58px" width="8" height="8" viewBox="0 0 8 8"><path d="M1.500 1.500Q3.500 0.500 4 2.500Q4.500 4.500 2.800 4Q1 3 1.500 1.500Z" fill="none" stroke="#666" stroke-width="0.7"/><path d="M3.500 3.500L5.500 5" stroke="#888" stroke-width="0.6"/></svg>
<span class="t" style="left:550px;top:195.08px;color:#000;font-size:6.7px;transform:scaleX(0.89);">Drag Mode</span>
<div style="left:530.6px;top:206.01999999999998px;width:6.4px;height:6.4px;background:#fff;border:0.7px solid #cbcbcb;"></div>
<svg style="left:539px;top:205.32px" width="8" height="8" viewBox="0 0 8 8"><path d="M1 2.500L4.500 1L7.500 3V6L4.500 7.800L1 5.500Z" fill="#333"/><path d="M1 2L3 1.200L3.500 3L1.500 3.500Z" fill="#d22"/><path d="M2.500 4.500L6.500 4M2.500 6L6.500 5.500" stroke="#999" stroke-width="0.5"/></svg>
<span class="t" style="left:550px;top:204.82px;color:#000;font-size:6.7px;transform:scaleX(0.89);">Draw Order</span>
<div style="left:530.6px;top:215.76px;width:6.4px;height:6.4px;background:#fff;border:0.7px solid #cbcbcb;"></div>
<svg style="left:539px;top:215.06px" width="8" height="8" viewBox="0 0 8 8"><path d="M2 2.500Q4 0.500 6 2.500" fill="none" stroke="#2a2" stroke-width="1.200"/><path d="M6 2.500Q7 4.500 5 6.500" fill="none" stroke="#3b3" stroke-width="1.200"/><path d="M2 2.500Q1 5 3 6.800L5 6.500" fill="none" stroke="#d22" stroke-width="1.200"/><circle cx="4" cy="4.300" r="0.900" fill="#d22"/></svg>
<span class="t" style="left:550px;top:214.56px;color:#000;font-size:6.7px;transform:scaleX(0.89);">Edge Tools</span>
<div style="left:530.6px;top:225.5px;width:6.4px;height:6.4px;background:#fff;border:0.7px solid #cbcbcb;"></div>
<svg style="left:539px;top:224.80px" width="8" height="8" viewBox="0 0 8 8"><ellipse cx="4" cy="4" rx="3.500" ry="2.300" fill="#fafafa" stroke="#555" stroke-width="0.6"/><circle cx="4" cy="4" r="0.700" fill="#444"/></svg>
<span class="t" style="left:550px;top:224.30px;color:#000;font-size:6.7px;transform:scaleX(0.89);">Ellipse</span>
<div style="left:530.6px;top:235.23999999999998px;width:6.4px;height:6.4px;background:#fff;border:0.7px solid #cbcbcb;"></div>
<svg style="left:539px;top:234.54px" width="8" height="8" viewBox="0 0 8 8"><ellipse cx="4" cy="4.500" rx="3.400" ry="2.600" fill="#2d50c0"/><ellipse cx="3.400" cy="3.600" rx="1.400" ry="0.900" fill="#8fa8ee"/></svg>
<span class="t" style="left:550px;top:234.04px;color:#000;font-size:6.7px;transform:scaleX(0.89);">Ellipsoid</span>
<div style="left:530.6px;top:244.98px;width:6.4px;height:6.4px;background:#fff;border:0.7px solid #cbcbcb;"></div>
<svg style="left:539px;top:244.28px" width="8" height="8" viewBox="0 0 8 8"><path d="M0.800 1.700L4 0.300L7.400 1.700Q7.700 4.800 4.100 7.900Q0.600 4.800 0.800 1.700Z" fill="#e58e14"/><path d="M2 2.200L4.100 1.300L6.400 2.300Q6.300 4.300 4.200 6.200Q2.200 4.300 2 2.200Z" fill="#f6b736"/><path d="M3 2.600L4.300 2L5.600 2.800Q5.400 3.900 4.300 4.900Q3.200 3.900 3 2.600Z" fill="#fbdc74"/></svg>
<span class="t" style="left:550px;top:243.78px;color:#000;font-size:6.7px;transform:scaleX(0.89);">Enscape</span>
<div style="left:530.6px;top:254.71999999999997px;width:6.4px;height:6.4px;background:#fff;border:0.7px solid #cbcbcb;"></div>
<svg style="left:530.600px;top:254.72px" width="6.4" height="6.4" viewBox="0 0 6.4 6.4"><path d="M1.300 3.300L2.700 4.700L5.200 1.500" fill="none" stroke="#000" stroke-width="1.300"/></svg>
<svg style="left:539px;top:254.02px" width="8" height="8" viewBox="0 0 8 8"><path d="M0.800 1.700L4 0.300L7.400 1.700Q7.700 4.800 4.100 7.900Q0.600 4.800 0.800 1.700Z" fill="#e58e14"/><path d="M2 2.200L4.100 1.300L6.400 2.300Q6.300 4.300 4.200 6.200Q2.200 4.300 2 2.200Z" fill="#f6b736"/><path d="M3 2.600L4.300 2L5.600 2.800Q5.400 3.900 4.300 4.900Q3.200 3.900 3 2.600Z" fill="#fbdc74"/></svg>
<span class="t" style="left:550px;top:253.52px;color:#000;font-size:6.7px;transform:scaleX(0.89);">Enscape (2 tabs)</span>
<div style="left:530.6px;top:264.46px;width:6.4px;height:6.4px;background:#fff;border:0.7px solid #cbcbcb;"></div>
<svg style="left:539px;top:263.76px" width="8" height="8" viewBox="0 0 8 8"><path d="M0.800 1.700L4 0.300L7.400 1.700Q7.700 4.800 4.100 7.900Q0.600 4.800 0.800 1.700Z" fill="#e58e14"/><path d="M2 2.200L4.100 1.300L6.400 2.300Q6.300 4.300 4.200 6.200Q2.200 4.300 2 2.200Z" fill="#f6b736"/><path d="M3 2.600L4.300 2L5.600 2.800Q5.400 3.900 4.300 4.900Q3.200 3.900 3 2.600Z" fill="#fbdc74"/></svg>
<span class="t" style="left:550px;top:263.26px;color:#000;font-size:6.7px;transform:scaleX(0.89);">Enscape Capturing</span>
<div style="left:530.6px;top:274.2px;width:6.4px;height:6.4px;background:#fff;border:0.7px solid #cbcbcb;"></div>
<svg style="left:539px;top:273.50px" width="8" height="8" viewBox="0 0 8 8"><path d="M0.800 3.200H6.800" stroke="#333" stroke-width="0.9"/><path d="M5 5.500H7.500" stroke="#777" stroke-width="0.6"/></svg>
<span class="t" style="left:550px;top:273.00px;color:#000;font-size:6.7px;transform:scaleX(0.89);">Extend</span>
<div style="left:530.6px;top:283.94px;width:6.4px;height:6.4px;background:#fff;border:0.7px solid #cbcbcb;"></div>
<svg style="left:539px;top:283.24px" width="8" height="8" viewBox="0 0 8 8"><path d="M1.500 1L3 0.800L3.500 7.500L2 7.600Z" fill="#888" stroke="#333" stroke-width="0.3"/><path d="M3.300 1.500L7.200 2.500L6 5L3.500 4.500Z" fill="#2d50c0"/><path d="M4 5L6.500 6.500" stroke="#444" stroke-width="0.6"/></svg>
<span class="t" style="left:550px;top:282.74px;color:#000;font-size:6.7px;transform:scaleX(0.89);">Extract Mesh</span>
<div style="left:530.6px;top:293.68px;width:6.4px;height:6.4px;background:#fff;border:0.7px solid #cbcbcb;"></div>
<svg style="left:539px;top:292.98px" width="8" height="8" viewBox="0 0 8 8"><path d="M1.200 2L4 1L6.800 2V6.500L4 7.600L1.200 6.500Z" fill="#2d50c0" stroke="#14256a" stroke-width="0.4"/><path d="M1.200 2L4 3L6.800 2L4 1Z" fill="#8fa8ee"/><rect x="3" y="4" width="2" height="2.400" fill="#dfe6fb"/></svg>
<span class="t" style="left:550px;top:292.48px;color:#000;font-size:6.7px;transform:scaleX(0.89);">Extrude</span>
<div style="left:530.6px;top:303.42px;width:6.4px;height:6.4px;background:#fff;border:0.7px solid #cbcbcb;"></div>
<svg style="left:539px;top:302.72px" width="8" height="8" viewBox="0 0 8 8"><path d="M1.200 2L4 1L6.800 2V6.500L4 7.600L1.200 6.500Z" fill="#2d50c0" stroke="#14256a" stroke-width="0.4"/><path d="M1.200 2L4 3L6.800 2L4 1Z" fill="#8fa8ee"/><rect x="3" y="4" width="2" height="2.400" fill="#dfe6fb"/></svg>
<span class="t" style="left:550px;top:302.22px;color:#000;font-size:6.7px;transform:scaleX(0.89);">Extrude Solid</span>
<div style="left:530.6px;top:313.16px;width:6.4px;height:6.4px;background:#fff;border:0.7px solid #cbcbcb;"></div>
<svg style="left:539px;top:312.46px" width="8" height="8" viewBox="0 0 8 8"><path d="M1.500 0.500H5L6.800 2.300V7.500H1.500Z" fill="#fff" stroke="#555" stroke-width="0.6"/></svg>
<span class="t" style="left:550px;top:311.96px;color:#000;font-size:6.7px;transform:scaleX(0.89);">File</span>
<div style="left:530.6px;top:322.9px;width:6.4px;height:6.4px;background:#fff;border:0.7px solid #cbcbcb;"></div>
<svg style="left:539px;top:322.20px" width="8" height="8" viewBox="0 0 8 8"><path d="M0.800 5Q2.500 1.500 5.500 3.200" fill="none" stroke="#111" stroke-width="1.200"/><path d="M5 1.800L7.400 3.800L4.800 4.400Z" fill="#111"/></svg>
<span class="t" style="left:550px;top:321.70px;color:#000;font-size:6.7px;transform:scaleX(0.89);">Geometry Fix</span>
<div style="left:530.6px;top:332.64px;width:6.4px;height:6.4px;background:#fff;border:0.7px solid #cbcbcb;"></div>
<svg style="left:539px;top:331.94px" width="8" height="8" viewBox="0 0 8 8"><path d="M4 0.800L7.400 6.800H0.600Z" fill="#111"/><circle cx="4" cy="3.300" r="1.200" fill="#9db4f4"/><circle cx="2.700" cy="5.500" r="1.200" fill="#fff"/><circle cx="5.300" cy="5.500" r="1.200" fill="#2d50c0"/></svg>
<span class="t" style="left:550px;top:331.44px;color:#000;font-size:6.7px;transform:scaleX(0.89);">Grouping</span>
<div style="left:530.6px;top:342.38px;width:6.4px;height:6.4px;background:#fff;border:0.7px solid #cbcbcb;"></div>
<svg style="left:539px;top:341.68px" width="8" height="8" viewBox="0 0 8 8"><path d="M4 4.500V0.800" stroke="#22a022" stroke-width="0.9"/><path d="M4 4.500L0.800 7" stroke="#d22" stroke-width="0.9"/><path d="M4 4.500L7.400 7" stroke="#22c" stroke-width="0.9"/><path d="M4 0L5.200 1.800H2.800Z" fill="#22a022"/><circle cx="4" cy="4.500" r="0.900" fill="#e8e8e8" stroke="#555" stroke-width="0.3"/></svg>
<span class="t" style="left:550px;top:341.18px;color:#000;font-size:6.7px;transform:scaleX(0.89);">Gumball</span>
<div style="left:530.6px;top:352.11999999999995px;width:6.4px;height:6.4px;background:#fff;border:0.7px solid #cbcbcb;"></div>
<svg style="left:539px;top:351.42px" width="8" height="8" viewBox="0 0 8 8"><circle cx="4" cy="4" r="3.600" fill="#2a5bd7" stroke="#14308a" stroke-width="0.4"/><path d="M2.900 3Q3 1.800 4.100 1.800Q5.300 1.900 5.100 3Q4.900 3.700 4 4.200V5" fill="none" stroke="#fff" stroke-width="0.9"/><circle cx="4" cy="6.200" r="0.550" fill="#fff"/></svg>
<span class="t" style="left:550px;top:350.92px;color:#000;font-size:6.7px;transform:scaleX(0.89);">Help</span>
<div style="left:530.6px;top:361.85999999999996px;width:6.4px;height:6.4px;background:#fff;border:0.7px solid #cbcbcb;"></div>
<svg style="left:539px;top:361.16px" width="8" height="8" viewBox="0 0 8 8"><path d="M4 0.600Q7.200 0.800 7 3.600Q6.600 5 5.400 5.800V6.600H2.600V5.800Q1.400 5 1 3.600Q0.800 0.800 4 0.600Z" fill="#f4e9a8" stroke="#6b6436" stroke-width="0.5"/><path d="M2.800 7.300H5.200" stroke="#555" stroke-width="0.7"/><path d="M2.800 3L4 4.500L5.200 3" stroke="#8a6" stroke-width="0.5" fill="none"/></svg>
<span class="t" style="left:550px;top:360.66px;color:#000;font-size:6.7px;transform:scaleX(0.89);">Hide Clusters</span>
<div style="left:792px;top:174.4px;width:7px;height:196.8px;background:#f0f0f0;"></div>
<div style="left:792px;top:222px;width:7px;height:31.6px;background:#cdcdcd;"></div>
<svg style="left:792.800px;top:177.500px" width="5.500" height="5" viewBox="0 0 5.5 5"><path d="M0.700 3.700L2.750 1.500L4.800 3.700" fill="none" stroke="#1a1a1a" stroke-width="1.200"/></svg>
<svg style="left:792.800px;top:364.400px" width="5.500" height="5" viewBox="0 0 5.5 5"><path d="M0.700 1.300L2.750 3.500L4.800 1.300" fill="none" stroke="#1a1a1a" stroke-width="1.200"/></svg>
<div style="left:525.3px;top:376px;width:278.3px;height:0.8px;background:#d6d6d6;"></div>
<div style="left:527.8px;top:238.6px;width:194.2px;height:36.8px;border:1.600px solid #f08a00;border-radius:3px;"></div>
<div style="left:531px;top:382px;width:107.8px;height:12.3px;background:#e1e1e1;border:0.8px solid #b4b4b4;"></div>
<span class="t" style="left:531px;top:383.200px;width:121.1px;text-align:center;font-size:6.7px;transform:scaleX(0.89);">Restore Defaults</span>
<div style="left:666px;top:382px;width:44.5px;height:12.3px;background:#e1e1e1;border:1.200px solid #0078d7;"></div>
<span class="t" style="left:666px;top:383.200px;width:50.0px;text-align:center;font-size:6.7px;transform:scaleX(0.89);">OK</span>
<div style="left:713px;top:382px;width:44px;height:12.3px;background:#e1e1e1;border:0.8px solid #b4b4b4;"></div>
<span class="t" style="left:713px;top:383.200px;width:49.4px;text-align:center;font-size:6.7px;transform:scaleX(0.89);">Cancel</span>
<div style="left:760px;top:382px;width:44px;height:12.3px;background:#e1e1e1;border:0.8px solid #b4b4b4;"></div>
<span class="t" style="left:760px;top:383.200px;width:49.4px;text-align:center;font-size:6.7px;transform:scaleX(0.89);">Help</span>
</body></html>
